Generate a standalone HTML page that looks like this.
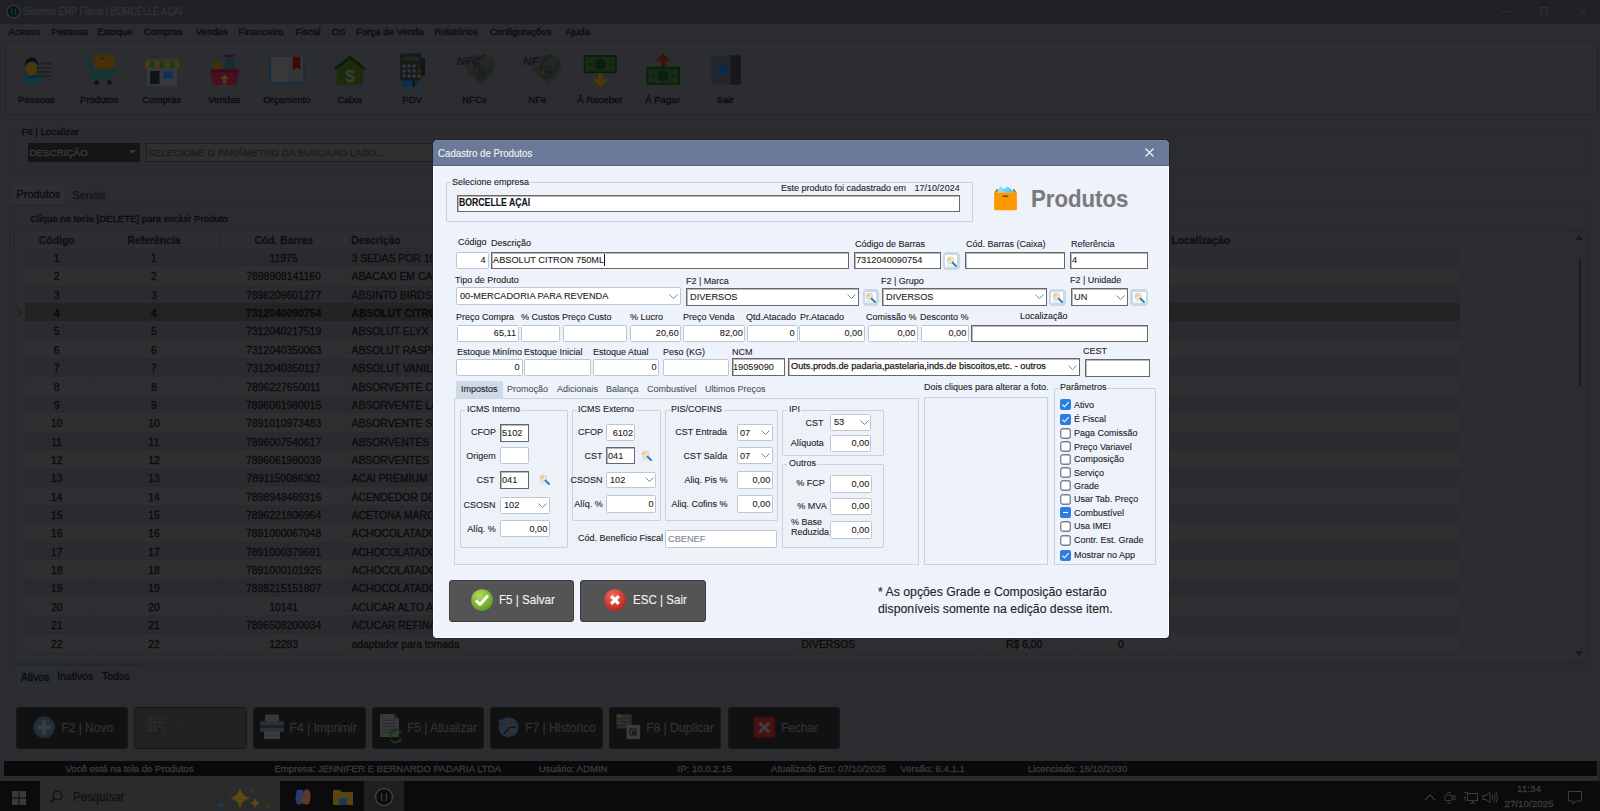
<!DOCTYPE html><html><head><meta charset="utf-8"><style>
html,body{margin:0;padding:0;width:1600px;height:811px;overflow:hidden;background:#2b2c2f;font-family:"Liberation Sans", sans-serif;}
.b{position:absolute;}
.t{position:absolute;white-space:nowrap;-webkit-text-stroke:0.25px currentColor;}
</style></head><body>
<div class="b" style="left:0.00px;top:0.00px;width:1600.00px;height:24.00px;background:#202125"></div>
<svg class="b" style="left:6px;top:4px" width="15" height="15" viewBox="0 0 15 15"><circle cx="7.5" cy="7.5" r="6.3" fill="#0c1518" stroke="#34363a" stroke-width="1.2"/><path d="M6 4.5 Q4.6 7.5 6 10.5 M9 4.5 Q10.4 7.5 9 10.5" stroke="#17464c" stroke-width="1.1" fill="none"/></svg>
<div class="t" style="left:22.90px;transform:scaleX(0.8696);transform-origin:0 0;top:4.58px;font-size:10.465px;line-height:13.08px;color:#333438;-webkit-text-stroke:0.3px currentColor;">Sistema ERP Fiscal | BORCELLE AÇAI</div>
<div class="b" style="left:1501.40px;top:10.80px;width:8.60px;height:1.00px;background:#2e2f33"></div>
<div class="b" style="left:1540.40px;top:7.00px;width:7.90px;height:7.80px;border:1px solid #2e2f33;box-sizing:border-box"></div>
<svg class="b" style="left:1578px;top:6.5px" width="9" height="9"><path d="M0.5 0.5L8.5 8.5M8.5 0.5L0.5 8.5" stroke="#2e2f33" stroke-width="1"/></svg>
<div class="b" style="left:0.00px;top:24.00px;width:1600.00px;height:17.00px;background:#2b2c2e"></div>
<div class="t" style="left:8.50px;top:26.27px;font-size:9.6px;line-height:12.0px;color:#0b0b0c;-webkit-text-stroke:0.3px currentColor;">Acesso</div>
<div class="t" style="left:51.25px;top:26.27px;font-size:9.6px;line-height:12.0px;color:#0b0b0c;-webkit-text-stroke:0.3px currentColor;">Pessoas</div>
<div class="t" style="left:97.25px;top:26.27px;font-size:9.6px;line-height:12.0px;color:#0b0b0c;-webkit-text-stroke:0.3px currentColor;">Estoque</div>
<div class="t" style="left:143.75px;top:26.27px;font-size:9.6px;line-height:12.0px;color:#0b0b0c;-webkit-text-stroke:0.3px currentColor;">Compras</div>
<div class="t" style="left:195.70px;top:26.27px;font-size:9.6px;line-height:12.0px;color:#0b0b0c;-webkit-text-stroke:0.3px currentColor;">Vendas</div>
<div class="t" style="left:238.30px;top:26.27px;font-size:9.6px;line-height:12.0px;color:#0b0b0c;-webkit-text-stroke:0.3px currentColor;">Financeiro</div>
<div class="t" style="left:295.50px;top:26.27px;font-size:9.6px;line-height:12.0px;color:#0b0b0c;-webkit-text-stroke:0.3px currentColor;">Fiscal</div>
<div class="t" style="left:331.70px;top:26.27px;font-size:9.6px;line-height:12.0px;color:#0b0b0c;-webkit-text-stroke:0.3px currentColor;">OS</div>
<div class="t" style="left:355.90px;top:26.27px;font-size:9.6px;line-height:12.0px;color:#0b0b0c;-webkit-text-stroke:0.3px currentColor;">Força de Venda</div>
<div class="t" style="left:434.60px;top:26.27px;font-size:9.6px;line-height:12.0px;color:#0b0b0c;-webkit-text-stroke:0.3px currentColor;">Relatórios</div>
<div class="t" style="left:489.70px;top:26.27px;font-size:9.6px;line-height:12.0px;color:#0b0b0c;-webkit-text-stroke:0.3px currentColor;">Configurações</div>
<div class="t" style="left:565.30px;top:26.27px;font-size:9.6px;line-height:12.0px;color:#0b0b0c;-webkit-text-stroke:0.3px currentColor;">Ajuda</div>
<div class="b" style="left:4.50px;top:41.00px;width:1593.50px;height:73.50px;border:1px solid #242528;box-sizing:border-box;background:#2c2d30"></div>
<div class="t" style="left:36.50px;transform:translateX(-50%) ;transform-origin:0 0;top:94.27px;font-size:9.6px;line-height:12.0px;color:#0b0b0c;-webkit-text-stroke:0.3px currentColor;">Pessoas</div>
<div class="t" style="left:99.10px;transform:translateX(-50%) ;transform-origin:0 0;top:94.27px;font-size:9.6px;line-height:12.0px;color:#0b0b0c;-webkit-text-stroke:0.3px currentColor;">Produtos</div>
<div class="t" style="left:161.70px;transform:translateX(-50%) ;transform-origin:0 0;top:94.27px;font-size:9.6px;line-height:12.0px;color:#0b0b0c;-webkit-text-stroke:0.3px currentColor;">Compras</div>
<div class="t" style="left:224.30px;transform:translateX(-50%) ;transform-origin:0 0;top:94.27px;font-size:9.6px;line-height:12.0px;color:#0b0b0c;-webkit-text-stroke:0.3px currentColor;">Vendas</div>
<div class="t" style="left:286.90px;transform:translateX(-50%) ;transform-origin:0 0;top:94.27px;font-size:9.6px;line-height:12.0px;color:#0b0b0c;-webkit-text-stroke:0.3px currentColor;">Orçamento</div>
<div class="t" style="left:349.50px;transform:translateX(-50%) ;transform-origin:0 0;top:94.27px;font-size:9.6px;line-height:12.0px;color:#0b0b0c;-webkit-text-stroke:0.3px currentColor;">Caixa</div>
<div class="t" style="left:412.10px;transform:translateX(-50%) ;transform-origin:0 0;top:94.27px;font-size:9.6px;line-height:12.0px;color:#0b0b0c;-webkit-text-stroke:0.3px currentColor;">PDV</div>
<div class="t" style="left:474.70px;transform:translateX(-50%) ;transform-origin:0 0;top:94.27px;font-size:9.6px;line-height:12.0px;color:#0b0b0c;-webkit-text-stroke:0.3px currentColor;">NFCe</div>
<div class="t" style="left:537.30px;transform:translateX(-50%) ;transform-origin:0 0;top:94.27px;font-size:9.6px;line-height:12.0px;color:#0b0b0c;-webkit-text-stroke:0.3px currentColor;">NFe</div>
<div class="t" style="left:599.90px;transform:translateX(-50%) ;transform-origin:0 0;top:94.27px;font-size:9.6px;line-height:12.0px;color:#0b0b0c;-webkit-text-stroke:0.3px currentColor;">Á Receber</div>
<div class="t" style="left:662.50px;transform:translateX(-50%) ;transform-origin:0 0;top:94.27px;font-size:9.6px;line-height:12.0px;color:#0b0b0c;-webkit-text-stroke:0.3px currentColor;">Á Pagar</div>
<div class="t" style="left:725.10px;transform:translateX(-50%) ;transform-origin:0 0;top:94.27px;font-size:9.6px;line-height:12.0px;color:#0b0b0c;-webkit-text-stroke:0.3px currentColor;">Sair</div>
<svg class="b" style="left:0;top:0" width="800" height="120"><path d="M22 83 Q22 75 30 74.5 L34 74.5 Q42 75 42 83Z" fill="#0f3546"/><rect x="36.5" y="62.8" width="15.3" height="1.4" fill="#1b2124"/><rect x="36.5" y="67" width="15.3" height="1.4" fill="#1b2124"/><rect x="36.5" y="71.2" width="15.3" height="1.4" fill="#1b2124"/><rect x="36.5" y="75.3" width="15.3" height="1.4" fill="#1b2124"/><ellipse cx="31.6" cy="68.8" rx="5.4" ry="7" fill="#4a3a0a"/><path d="M25.4 67 Q24.6 57.6 31.6 57.6 Q38.6 57.6 37.8 67 Q37 62.5 34.5 62 Q31 61.5 28 62.5 Q26 63.5 25.4 67Z" fill="#0f0f10"/><path d="M28.5 75 Q31.6 77.5 34.7 75 L34.7 76.5 Q31.6 78.5 28.5 76.5Z" fill="#0a2030"/><rect x="94.4" y="55" width="19.6" height="15" rx="1.5" fill="#4a3008"/><rect x="100.5" y="58" width="4.5" height="1" fill="#2a1a04"/><path d="M84 57 Q86 56 88 57.5 L92.5 74.5 L113 74.5 L113 70 L94 70" stroke="#0a3a30" stroke-width="2.6" fill="none"/><path d="M92.5 74.5 L92.5 78.5 L111 78.5" stroke="#0a3a30" stroke-width="2.6" fill="none"/><circle cx="96.6" cy="82.6" r="2.3" fill="#0e0e0f" stroke="#1e1e1f" stroke-width="0.8"/><circle cx="109.5" cy="82.6" r="2.3" fill="#0e0e0f" stroke="#1e1e1f" stroke-width="0.8"/><rect x="147" y="54.7" width="30" height="31" fill="#38393b"/><rect x="147" y="54.7" width="30" height="5" fill="#2e2f31"/><circle cx="150" cy="57" r="0.8" fill="#1e1e1f"/><circle cx="153" cy="57" r="0.8" fill="#1e1e1f"/><circle cx="156" cy="57" r="0.8" fill="#1e1e1f"/><path d="M145.40 60.4 L148.47 60.4 L149.47 67 Q146.90 70 144.40 67Z" fill="#4a3a10"/><path d="M150.47 60.4 L153.54 60.4 L154.54 67 Q151.97 70 149.47 67Z" fill="#1e3a12"/><path d="M155.54 60.4 L158.61 60.4 L159.61 67 Q157.04 70 154.54 67Z" fill="#4a3a10"/><path d="M160.61 60.4 L163.68 60.4 L164.68 67 Q162.11 70 159.61 67Z" fill="#1e3a12"/><path d="M165.68 60.4 L168.75 60.4 L169.75 67 Q167.18 70 164.68 67Z" fill="#4a3a10"/><path d="M170.75 60.4 L173.82 60.4 L174.82 67 Q172.25 70 169.75 67Z" fill="#1e3a12"/><path d="M175.82 60.4 L178.89 60.4 L179.89 67 Q177.32 70 174.82 67Z" fill="#4a3a10"/><rect x="150" y="71" width="9.6" height="13.2" fill="#101618"/><rect x="163.5" y="71.6" width="9.5" height="7.4" fill="#0e3060"/><path d="M223.7 69 L225 60 L225 56 L234 56 L234 60 L235.5 69Z" fill="#1e2a34"/><rect x="224.5" y="54.7" width="10" height="2.4" rx="1" fill="#2a0e2a"/><circle cx="217.5" cy="65.5" r="4.2" fill="#4a2e08"/><path d="M211 58.5 Q215 58.5 217 62 Q213 62 211 58.5Z" fill="#1a3a10"/><rect x="210.2" y="69.4" width="28.7" height="3.3" rx="1" fill="#3a0a1c"/><path d="M211 72.7 L238 72.7 L236.5 85 L212.5 85Z" fill="#4a0e22"/><path d="M224.5 74.5 L229 79 L226.3 79 L226.3 83.5 L222.7 83.5 L222.7 79 L220 79Z" fill="#4a4010"/><rect x="270.5" y="57" width="33.5" height="26" fill="#38393b"/><rect x="287.5" y="57" width="16.5" height="26" fill="#343537"/><path d="M270.5 57 L270.5 83 L304 83 L304 57" stroke="#0e2e4a" stroke-width="1.5" fill="none"/><path d="M292.9 57 L300.2 57 L300.2 70 L296.5 67.5 L292.9 70Z" fill="#3a0808"/><path d="M336.5 68 L350 58 L363.2 68 L363.2 84.9 L336.5 84.9Z" fill="#1e2a0e"/><path d="M334.8 67.5 L350 55.3 L364.9 67.5 L364.9 70.5 L350 59.5 L334.8 70.5Z" fill="#0a1e0a"/><text x="350" y="81.5" font-family="Liberation Sans" font-weight="700" font-size="17" fill="#3a3c38" text-anchor="middle">$</text><rect x="421" y="58" width="4" height="18" rx="1" fill="#101418"/><rect x="402.4" y="79" width="15.8" height="7.8" rx="1" fill="#0e2e50"/><rect x="413" y="79" width="1.5" height="7.8" fill="#0a0a0a"/><rect x="400.2" y="53.6" width="21.4" height="27" rx="2.5" fill="#131a20"/><rect x="402.6" y="56.4" width="16.4" height="4.4" fill="#1e2a12"/><rect x="402.5" y="64.5" width="3" height="3" fill="#3a3a3b"/><rect x="407.5" y="64.5" width="3" height="3" fill="#3a3a3b"/><rect x="412.5" y="64.5" width="3" height="3" fill="#3a3a3b"/><rect x="417.5" y="64.5" width="3" height="3" fill="#4a1010"/><rect x="402.5" y="69.5" width="3" height="3" fill="#3a3a3b"/><rect x="407.5" y="69.5" width="3" height="3" fill="#3a3a3b"/><rect x="412.5" y="69.5" width="3" height="3" fill="#3a3a3b"/><rect x="417.5" y="69.5" width="3" height="3" fill="#1a3a14"/><rect x="402.5" y="74.5" width="3" height="3" fill="#3a3a3b"/><rect x="407.5" y="74.5" width="3" height="3" fill="#3a3a3b"/><rect x="412.5" y="74.5" width="3" height="3" fill="#3a3a3b"/><rect x="417.5" y="74.5" width="3" height="3" fill="#4a3a08"/><g transform="translate(0.0 0)"><path d="M466 60 Q472 54 480 55 Q490 54 494 60 Q497 66 493 72 Q490 80 484 81 L482 86 Q479 82 474 78 Q468 74 466 68 Q463 64 466 60Z" fill="#252629"/><ellipse cx="482.6" cy="66.7" rx="7.5" ry="13" transform="rotate(30 482.6 66.7)" fill="none" stroke="#0e2a0e" stroke-width="1.3"/><path d="M486 54.5 Q492 56 491 62" stroke="#3a2e08" stroke-width="1.3" fill="none"/><path d="M474 70 Q472 77 477 79" stroke="#3a2e08" stroke-width="1.3" fill="none"/><text x="474" y="77" font-family="Liberation Sans" font-style="italic" font-weight="700" font-size="21" fill="#2e2f32" stroke="#161618" stroke-width="1">e</text><text x="456.7" y="64.5" font-family="Liberation Sans" font-style="italic" font-weight="700" font-size="11.5" fill="#161618">NFC</text></g><g transform="translate(66.4 0)"><path d="M466 60 Q472 54 480 55 Q490 54 494 60 Q497 66 493 72 Q490 80 484 81 L482 86 Q479 82 474 78 Q468 74 466 68 Q463 64 466 60Z" fill="#252629"/><ellipse cx="482.6" cy="66.7" rx="7.5" ry="13" transform="rotate(30 482.6 66.7)" fill="none" stroke="#0e2a0e" stroke-width="1.3"/><path d="M486 54.5 Q492 56 491 62" stroke="#3a2e08" stroke-width="1.3" fill="none"/><path d="M474 70 Q472 77 477 79" stroke="#3a2e08" stroke-width="1.3" fill="none"/><text x="474" y="77" font-family="Liberation Sans" font-style="italic" font-weight="700" font-size="21" fill="#2e2f32" stroke="#161618" stroke-width="1">e</text><text x="456.7" y="64.5" font-family="Liberation Sans" font-style="italic" font-weight="700" font-size="11.5" fill="#161618">NF</text></g><rect x="583.7" y="55" width="33.3" height="18.3" fill="#082208"/><rect x="585.7" y="57" width="29.3" height="14.3" fill="#172a17"/><circle cx="600.4" cy="64.2" r="5.5" fill="#0a200a"/><circle cx="590.5" cy="64.2" r="1.2" fill="#0a200a"/><circle cx="610.3" cy="64.2" r="1.2" fill="#0a200a"/><rect x="598" y="73.3" width="5" height="6" fill="#4a3a08"/><path d="M593 79 L608 79 L600.5 87.4Z" fill="#4a3a08"/><path d="M656 61 L663 52.7 L670 61Z" fill="#3a1208"/><rect x="661" y="61" width="4.5" height="6" fill="#3a1208"/><rect x="646.3" y="66.9" width="33.7" height="18" fill="#082208"/><rect x="648.3" y="68.9" width="29.7" height="14" fill="#172a17"/><circle cx="663" cy="75.9" r="5.5" fill="#0a200a"/><circle cx="653" cy="75.9" r="1.2" fill="#0a200a"/><circle cx="673" cy="75.9" r="1.2" fill="#0a200a"/><rect x="711.2" y="55.3" width="19.1" height="29.3" fill="#23272d"/><rect x="730.3" y="55.3" width="10.5" height="29.3" fill="#15171a"/><rect x="713" y="68.7" width="8" height="2.8" fill="#0a2a4a"/><path d="M720 64 L728 70.1 L720 76.2Z" fill="#0a2a4a"/></svg>
<div class="b" style="left:14.30px;top:131.50px;width:1572.90px;height:40.70px;border:1px solid #262729;box-sizing:border-box"></div>
<div class="b" style="left:19.00px;top:126.00px;width:61.00px;height:12.00px;background:#2b2c2f"></div>
<div class="t" style="left:21.50px;top:126.27px;font-size:9.6px;line-height:12.0px;color:#0b0b0c;-webkit-text-stroke:0.3px currentColor;">F6 | Localizar</div>
<div class="b" style="left:27.50px;top:143.00px;width:112.80px;height:18.75px;background:#151516"></div>
<div class="t" style="left:29.50px;top:146.78px;font-size:9.8px;line-height:12.25px;color:#3d3d3f;-webkit-text-stroke:0.3px currentColor;">DESCRIÇÃO</div>
<svg class="b" style="left:129px;top:150px" width="7" height="4"><path d="M0 0L7 0L3.5 4Z" fill="#3a3a3c"/></svg>
<div class="b" style="left:146.30px;top:143.00px;width:1003.70px;height:19.00px;border:1px solid #1d1d1f;box-sizing:border-box;background:#2e2f31"></div>
<div class="t" style="left:148.50px;top:146.78px;font-size:9.8px;line-height:12.25px;color:#1c1c1e;-webkit-text-stroke:0.3px currentColor;">SELECIONE O PARÂMETRO DA BUSCA AO LADO...</div>
<div class="b" style="left:13.20px;top:185.10px;width:51.80px;height:18.90px;background:#2f3033;border-radius:2px 2px 0 0"></div>
<div class="t" style="left:16.60px;top:188.21px;font-size:10.9px;line-height:13.62px;color:#0b0b0c;-webkit-text-stroke:0.3px currentColor;">Produtos</div>
<div class="t" style="left:72.50px;top:188.71px;font-size:10.9px;line-height:13.62px;color:#161618;-webkit-text-stroke:0.3px currentColor;">Seriais</div>
<div class="b" style="left:10.30px;top:204.50px;width:1580.90px;height:460.50px;border:1px solid #262729;box-sizing:border-box"></div>
<div class="t" style="left:30.40px;top:213.17px;font-size:9.6px;line-height:12.0px;color:#0b0b0c;-webkit-text-stroke:0.3px currentColor;">Clique na tecla [DELETE] para excluir Produto</div>
<div class="b" style="left:13.50px;top:229.80px;width:1574.00px;height:433.00px;border:1px solid #242527;box-sizing:border-box;background:#2c2d30"></div>
<div class="b" style="left:14.50px;top:230.80px;width:1445.50px;height:17.20px;background:#2d2e31"></div>
<div class="b" style="left:24.50px;top:230.80px;width:1.00px;height:17.20px;background:#28292b"></div>
<div class="b" style="left:89.00px;top:230.80px;width:1.00px;height:17.20px;background:#28292b"></div>
<div class="b" style="left:219.20px;top:230.80px;width:1.00px;height:17.20px;background:#28292b"></div>
<div class="b" style="left:348.10px;top:230.80px;width:1.00px;height:17.20px;background:#28292b"></div>
<div class="b" style="left:797.00px;top:230.80px;width:1.00px;height:17.20px;background:#28292b"></div>
<div class="b" style="left:976.60px;top:230.80px;width:1.00px;height:17.20px;background:#28292b"></div>
<div class="b" style="left:1072.00px;top:230.80px;width:1.00px;height:17.20px;background:#28292b"></div>
<div class="b" style="left:1168.75px;top:230.80px;width:1.00px;height:17.20px;background:#28292b"></div>
<div class="b" style="left:1460.00px;top:230.80px;width:1.00px;height:17.20px;background:#28292b"></div>
<div class="t" style="left:56.75px;transform:translateX(-50%) ;transform-origin:0 0;top:233.65px;font-size:10.4px;line-height:13.0px;color:#111113;font-weight:700;-webkit-text-stroke:0.3px currentColor;">Código</div>
<div class="t" style="left:154.00px;transform:translateX(-50%) ;transform-origin:0 0;top:233.65px;font-size:10.4px;line-height:13.0px;color:#111113;font-weight:700;-webkit-text-stroke:0.3px currentColor;">Referência</div>
<div class="t" style="left:283.60px;transform:translateX(-50%) ;transform-origin:0 0;top:233.65px;font-size:10.4px;line-height:13.0px;color:#111113;font-weight:700;-webkit-text-stroke:0.3px currentColor;">Cód. Barras</div>
<div class="t" style="left:351.00px;top:233.65px;font-size:10.4px;line-height:13.0px;color:#111113;font-weight:700;-webkit-text-stroke:0.3px currentColor;">Descrição</div>
<div class="t" style="left:1171.30px;top:233.65px;font-size:10.4px;line-height:13.0px;color:#111113;font-weight:700;-webkit-text-stroke:0.3px currentColor;">Localização</div>
<div class="b" style="left:24.50px;top:248.00px;width:1435.50px;height:18.36px;background:#2a2b2e"></div>
<div class="t" style="left:56.75px;transform:translateX(-50%) ;transform-origin:0 0;top:252.00px;font-size:10.4px;line-height:13.0px;color:#0b0b0c;-webkit-text-stroke:0.3px currentColor;">1</div>
<div class="t" style="left:154.00px;transform:translateX(-50%) ;transform-origin:0 0;top:252.00px;font-size:10.4px;line-height:13.0px;color:#0b0b0c;-webkit-text-stroke:0.3px currentColor;">1</div>
<div class="t" style="left:283.60px;transform:translateX(-50%) ;transform-origin:0 0;top:252.00px;font-size:10.4px;line-height:13.0px;color:#0b0b0c;-webkit-text-stroke:0.3px currentColor;">11975</div>
<div class="t" style="left:351.50px;top:252.00px;font-size:10.4px;line-height:13.0px;color:#0b0b0c;-webkit-text-stroke:0.3px currentColor;">3 SEDAS POR 10 UNIDADES</div>
<div class="b" style="left:24.50px;top:248.00px;width:1.00px;height:18.36px;background:rgba(0,0,0,0.06)"></div>
<div class="b" style="left:89.00px;top:248.00px;width:1.00px;height:18.36px;background:rgba(0,0,0,0.06)"></div>
<div class="b" style="left:219.20px;top:248.00px;width:1.00px;height:18.36px;background:rgba(0,0,0,0.06)"></div>
<div class="b" style="left:348.10px;top:248.00px;width:1.00px;height:18.36px;background:rgba(0,0,0,0.06)"></div>
<div class="b" style="left:797.00px;top:248.00px;width:1.00px;height:18.36px;background:rgba(0,0,0,0.06)"></div>
<div class="b" style="left:976.60px;top:248.00px;width:1.00px;height:18.36px;background:rgba(0,0,0,0.06)"></div>
<div class="b" style="left:1072.00px;top:248.00px;width:1.00px;height:18.36px;background:rgba(0,0,0,0.06)"></div>
<div class="b" style="left:1168.75px;top:248.00px;width:1.00px;height:18.36px;background:rgba(0,0,0,0.06)"></div>
<div class="b" style="left:24.50px;top:266.36px;width:1435.50px;height:18.36px;background:#2e2f31"></div>
<div class="t" style="left:56.75px;transform:translateX(-50%) ;transform-origin:0 0;top:270.36px;font-size:10.4px;line-height:13.0px;color:#0b0b0c;-webkit-text-stroke:0.3px currentColor;">2</div>
<div class="t" style="left:154.00px;transform:translateX(-50%) ;transform-origin:0 0;top:270.36px;font-size:10.4px;line-height:13.0px;color:#0b0b0c;-webkit-text-stroke:0.3px currentColor;">2</div>
<div class="t" style="left:283.60px;transform:translateX(-50%) ;transform-origin:0 0;top:270.36px;font-size:10.4px;line-height:13.0px;color:#0b0b0c;-webkit-text-stroke:0.3px currentColor;">7898908141160</div>
<div class="t" style="left:351.50px;top:270.36px;font-size:10.4px;line-height:13.0px;color:#0b0b0c;-webkit-text-stroke:0.3px currentColor;">ABACAXI EM CALDA</div>
<div class="b" style="left:24.50px;top:266.36px;width:1.00px;height:18.36px;background:rgba(0,0,0,0.06)"></div>
<div class="b" style="left:89.00px;top:266.36px;width:1.00px;height:18.36px;background:rgba(0,0,0,0.06)"></div>
<div class="b" style="left:219.20px;top:266.36px;width:1.00px;height:18.36px;background:rgba(0,0,0,0.06)"></div>
<div class="b" style="left:348.10px;top:266.36px;width:1.00px;height:18.36px;background:rgba(0,0,0,0.06)"></div>
<div class="b" style="left:797.00px;top:266.36px;width:1.00px;height:18.36px;background:rgba(0,0,0,0.06)"></div>
<div class="b" style="left:976.60px;top:266.36px;width:1.00px;height:18.36px;background:rgba(0,0,0,0.06)"></div>
<div class="b" style="left:1072.00px;top:266.36px;width:1.00px;height:18.36px;background:rgba(0,0,0,0.06)"></div>
<div class="b" style="left:1168.75px;top:266.36px;width:1.00px;height:18.36px;background:rgba(0,0,0,0.06)"></div>
<div class="b" style="left:24.50px;top:284.72px;width:1435.50px;height:18.36px;background:#2a2b2e"></div>
<div class="t" style="left:56.75px;transform:translateX(-50%) ;transform-origin:0 0;top:288.72px;font-size:10.4px;line-height:13.0px;color:#0b0b0c;-webkit-text-stroke:0.3px currentColor;">3</div>
<div class="t" style="left:154.00px;transform:translateX(-50%) ;transform-origin:0 0;top:288.72px;font-size:10.4px;line-height:13.0px;color:#0b0b0c;-webkit-text-stroke:0.3px currentColor;">3</div>
<div class="t" style="left:283.60px;transform:translateX(-50%) ;transform-origin:0 0;top:288.72px;font-size:10.4px;line-height:13.0px;color:#0b0b0c;-webkit-text-stroke:0.3px currentColor;">7896209601277</div>
<div class="t" style="left:351.50px;top:288.72px;font-size:10.4px;line-height:13.0px;color:#0b0b0c;-webkit-text-stroke:0.3px currentColor;">ABSINTO BIRDS 750ML</div>
<div class="b" style="left:24.50px;top:284.72px;width:1.00px;height:18.36px;background:rgba(0,0,0,0.06)"></div>
<div class="b" style="left:89.00px;top:284.72px;width:1.00px;height:18.36px;background:rgba(0,0,0,0.06)"></div>
<div class="b" style="left:219.20px;top:284.72px;width:1.00px;height:18.36px;background:rgba(0,0,0,0.06)"></div>
<div class="b" style="left:348.10px;top:284.72px;width:1.00px;height:18.36px;background:rgba(0,0,0,0.06)"></div>
<div class="b" style="left:797.00px;top:284.72px;width:1.00px;height:18.36px;background:rgba(0,0,0,0.06)"></div>
<div class="b" style="left:976.60px;top:284.72px;width:1.00px;height:18.36px;background:rgba(0,0,0,0.06)"></div>
<div class="b" style="left:1072.00px;top:284.72px;width:1.00px;height:18.36px;background:rgba(0,0,0,0.06)"></div>
<div class="b" style="left:1168.75px;top:284.72px;width:1.00px;height:18.36px;background:rgba(0,0,0,0.06)"></div>
<div class="b" style="left:24.50px;top:303.08px;width:1435.50px;height:18.36px;background:#232324"></div>
<svg class="b" style="left:16px;top:308.08px" width="6" height="9"><path d="M1 0.5L5 4.5L1 8.5" stroke="#161617" stroke-width="1" fill="none"/></svg>
<div class="t" style="left:56.75px;transform:translateX(-50%) ;transform-origin:0 0;top:307.08px;font-size:10.4px;line-height:13.0px;color:#0b0b0c;font-weight:700;-webkit-text-stroke:0.3px currentColor;">4</div>
<div class="t" style="left:154.00px;transform:translateX(-50%) ;transform-origin:0 0;top:307.08px;font-size:10.4px;line-height:13.0px;color:#0b0b0c;font-weight:700;-webkit-text-stroke:0.3px currentColor;">4</div>
<div class="t" style="left:283.60px;transform:translateX(-50%) ;transform-origin:0 0;top:307.08px;font-size:10.4px;line-height:13.0px;color:#0b0b0c;font-weight:700;-webkit-text-stroke:0.3px currentColor;">7312040090754</div>
<div class="t" style="left:351.50px;top:307.08px;font-size:10.4px;line-height:13.0px;color:#0b0b0c;font-weight:700;-webkit-text-stroke:0.3px currentColor;">ABSOLUT CITRON 750ML</div>
<div class="b" style="left:24.50px;top:303.08px;width:1.00px;height:18.36px;background:rgba(0,0,0,0.06)"></div>
<div class="b" style="left:89.00px;top:303.08px;width:1.00px;height:18.36px;background:rgba(0,0,0,0.06)"></div>
<div class="b" style="left:219.20px;top:303.08px;width:1.00px;height:18.36px;background:rgba(0,0,0,0.06)"></div>
<div class="b" style="left:348.10px;top:303.08px;width:1.00px;height:18.36px;background:rgba(0,0,0,0.06)"></div>
<div class="b" style="left:797.00px;top:303.08px;width:1.00px;height:18.36px;background:rgba(0,0,0,0.06)"></div>
<div class="b" style="left:976.60px;top:303.08px;width:1.00px;height:18.36px;background:rgba(0,0,0,0.06)"></div>
<div class="b" style="left:1072.00px;top:303.08px;width:1.00px;height:18.36px;background:rgba(0,0,0,0.06)"></div>
<div class="b" style="left:1168.75px;top:303.08px;width:1.00px;height:18.36px;background:rgba(0,0,0,0.06)"></div>
<div class="b" style="left:24.50px;top:321.44px;width:1435.50px;height:18.36px;background:#2a2b2e"></div>
<div class="t" style="left:56.75px;transform:translateX(-50%) ;transform-origin:0 0;top:325.44px;font-size:10.4px;line-height:13.0px;color:#0b0b0c;-webkit-text-stroke:0.3px currentColor;">5</div>
<div class="t" style="left:154.00px;transform:translateX(-50%) ;transform-origin:0 0;top:325.44px;font-size:10.4px;line-height:13.0px;color:#0b0b0c;-webkit-text-stroke:0.3px currentColor;">5</div>
<div class="t" style="left:283.60px;transform:translateX(-50%) ;transform-origin:0 0;top:325.44px;font-size:10.4px;line-height:13.0px;color:#0b0b0c;-webkit-text-stroke:0.3px currentColor;">7312040217519</div>
<div class="t" style="left:351.50px;top:325.44px;font-size:10.4px;line-height:13.0px;color:#0b0b0c;-webkit-text-stroke:0.3px currentColor;">ABSOLUT ELYX 750ML</div>
<div class="b" style="left:24.50px;top:321.44px;width:1.00px;height:18.36px;background:rgba(0,0,0,0.06)"></div>
<div class="b" style="left:89.00px;top:321.44px;width:1.00px;height:18.36px;background:rgba(0,0,0,0.06)"></div>
<div class="b" style="left:219.20px;top:321.44px;width:1.00px;height:18.36px;background:rgba(0,0,0,0.06)"></div>
<div class="b" style="left:348.10px;top:321.44px;width:1.00px;height:18.36px;background:rgba(0,0,0,0.06)"></div>
<div class="b" style="left:797.00px;top:321.44px;width:1.00px;height:18.36px;background:rgba(0,0,0,0.06)"></div>
<div class="b" style="left:976.60px;top:321.44px;width:1.00px;height:18.36px;background:rgba(0,0,0,0.06)"></div>
<div class="b" style="left:1072.00px;top:321.44px;width:1.00px;height:18.36px;background:rgba(0,0,0,0.06)"></div>
<div class="b" style="left:1168.75px;top:321.44px;width:1.00px;height:18.36px;background:rgba(0,0,0,0.06)"></div>
<div class="b" style="left:24.50px;top:339.80px;width:1435.50px;height:18.36px;background:#2e2f31"></div>
<div class="t" style="left:56.75px;transform:translateX(-50%) ;transform-origin:0 0;top:343.80px;font-size:10.4px;line-height:13.0px;color:#0b0b0c;-webkit-text-stroke:0.3px currentColor;">6</div>
<div class="t" style="left:154.00px;transform:translateX(-50%) ;transform-origin:0 0;top:343.80px;font-size:10.4px;line-height:13.0px;color:#0b0b0c;-webkit-text-stroke:0.3px currentColor;">6</div>
<div class="t" style="left:283.60px;transform:translateX(-50%) ;transform-origin:0 0;top:343.80px;font-size:10.4px;line-height:13.0px;color:#0b0b0c;-webkit-text-stroke:0.3px currentColor;">7312040350063</div>
<div class="t" style="left:351.50px;top:343.80px;font-size:10.4px;line-height:13.0px;color:#0b0b0c;-webkit-text-stroke:0.3px currentColor;">ABSOLUT RASPBERRI</div>
<div class="b" style="left:24.50px;top:339.80px;width:1.00px;height:18.36px;background:rgba(0,0,0,0.06)"></div>
<div class="b" style="left:89.00px;top:339.80px;width:1.00px;height:18.36px;background:rgba(0,0,0,0.06)"></div>
<div class="b" style="left:219.20px;top:339.80px;width:1.00px;height:18.36px;background:rgba(0,0,0,0.06)"></div>
<div class="b" style="left:348.10px;top:339.80px;width:1.00px;height:18.36px;background:rgba(0,0,0,0.06)"></div>
<div class="b" style="left:797.00px;top:339.80px;width:1.00px;height:18.36px;background:rgba(0,0,0,0.06)"></div>
<div class="b" style="left:976.60px;top:339.80px;width:1.00px;height:18.36px;background:rgba(0,0,0,0.06)"></div>
<div class="b" style="left:1072.00px;top:339.80px;width:1.00px;height:18.36px;background:rgba(0,0,0,0.06)"></div>
<div class="b" style="left:1168.75px;top:339.80px;width:1.00px;height:18.36px;background:rgba(0,0,0,0.06)"></div>
<div class="b" style="left:24.50px;top:358.16px;width:1435.50px;height:18.36px;background:#2a2b2e"></div>
<div class="t" style="left:56.75px;transform:translateX(-50%) ;transform-origin:0 0;top:362.16px;font-size:10.4px;line-height:13.0px;color:#0b0b0c;-webkit-text-stroke:0.3px currentColor;">7</div>
<div class="t" style="left:154.00px;transform:translateX(-50%) ;transform-origin:0 0;top:362.16px;font-size:10.4px;line-height:13.0px;color:#0b0b0c;-webkit-text-stroke:0.3px currentColor;">7</div>
<div class="t" style="left:283.60px;transform:translateX(-50%) ;transform-origin:0 0;top:362.16px;font-size:10.4px;line-height:13.0px;color:#0b0b0c;-webkit-text-stroke:0.3px currentColor;">7312040350117</div>
<div class="t" style="left:351.50px;top:362.16px;font-size:10.4px;line-height:13.0px;color:#0b0b0c;-webkit-text-stroke:0.3px currentColor;">ABSOLUT VANILIA</div>
<div class="b" style="left:24.50px;top:358.16px;width:1.00px;height:18.36px;background:rgba(0,0,0,0.06)"></div>
<div class="b" style="left:89.00px;top:358.16px;width:1.00px;height:18.36px;background:rgba(0,0,0,0.06)"></div>
<div class="b" style="left:219.20px;top:358.16px;width:1.00px;height:18.36px;background:rgba(0,0,0,0.06)"></div>
<div class="b" style="left:348.10px;top:358.16px;width:1.00px;height:18.36px;background:rgba(0,0,0,0.06)"></div>
<div class="b" style="left:797.00px;top:358.16px;width:1.00px;height:18.36px;background:rgba(0,0,0,0.06)"></div>
<div class="b" style="left:976.60px;top:358.16px;width:1.00px;height:18.36px;background:rgba(0,0,0,0.06)"></div>
<div class="b" style="left:1072.00px;top:358.16px;width:1.00px;height:18.36px;background:rgba(0,0,0,0.06)"></div>
<div class="b" style="left:1168.75px;top:358.16px;width:1.00px;height:18.36px;background:rgba(0,0,0,0.06)"></div>
<div class="b" style="left:24.50px;top:376.52px;width:1435.50px;height:18.36px;background:#2e2f31"></div>
<div class="t" style="left:56.75px;transform:translateX(-50%) ;transform-origin:0 0;top:380.52px;font-size:10.4px;line-height:13.0px;color:#0b0b0c;-webkit-text-stroke:0.3px currentColor;">8</div>
<div class="t" style="left:154.00px;transform:translateX(-50%) ;transform-origin:0 0;top:380.52px;font-size:10.4px;line-height:13.0px;color:#0b0b0c;-webkit-text-stroke:0.3px currentColor;">8</div>
<div class="t" style="left:283.60px;transform:translateX(-50%) ;transform-origin:0 0;top:380.52px;font-size:10.4px;line-height:13.0px;color:#0b0b0c;-webkit-text-stroke:0.3px currentColor;">7896227650011</div>
<div class="t" style="left:351.50px;top:380.52px;font-size:10.4px;line-height:13.0px;color:#0b0b0c;-webkit-text-stroke:0.3px currentColor;">ABSORVENTE COM ABAS</div>
<div class="b" style="left:24.50px;top:376.52px;width:1.00px;height:18.36px;background:rgba(0,0,0,0.06)"></div>
<div class="b" style="left:89.00px;top:376.52px;width:1.00px;height:18.36px;background:rgba(0,0,0,0.06)"></div>
<div class="b" style="left:219.20px;top:376.52px;width:1.00px;height:18.36px;background:rgba(0,0,0,0.06)"></div>
<div class="b" style="left:348.10px;top:376.52px;width:1.00px;height:18.36px;background:rgba(0,0,0,0.06)"></div>
<div class="b" style="left:797.00px;top:376.52px;width:1.00px;height:18.36px;background:rgba(0,0,0,0.06)"></div>
<div class="b" style="left:976.60px;top:376.52px;width:1.00px;height:18.36px;background:rgba(0,0,0,0.06)"></div>
<div class="b" style="left:1072.00px;top:376.52px;width:1.00px;height:18.36px;background:rgba(0,0,0,0.06)"></div>
<div class="b" style="left:1168.75px;top:376.52px;width:1.00px;height:18.36px;background:rgba(0,0,0,0.06)"></div>
<div class="b" style="left:24.50px;top:394.88px;width:1435.50px;height:18.36px;background:#2a2b2e"></div>
<div class="t" style="left:56.75px;transform:translateX(-50%) ;transform-origin:0 0;top:398.88px;font-size:10.4px;line-height:13.0px;color:#0b0b0c;-webkit-text-stroke:0.3px currentColor;">9</div>
<div class="t" style="left:154.00px;transform:translateX(-50%) ;transform-origin:0 0;top:398.88px;font-size:10.4px;line-height:13.0px;color:#0b0b0c;-webkit-text-stroke:0.3px currentColor;">9</div>
<div class="t" style="left:283.60px;transform:translateX(-50%) ;transform-origin:0 0;top:398.88px;font-size:10.4px;line-height:13.0px;color:#0b0b0c;-webkit-text-stroke:0.3px currentColor;">7896061980015</div>
<div class="t" style="left:351.50px;top:398.88px;font-size:10.4px;line-height:13.0px;color:#0b0b0c;-webkit-text-stroke:0.3px currentColor;">ABSORVENTE LARGO</div>
<div class="b" style="left:24.50px;top:394.88px;width:1.00px;height:18.36px;background:rgba(0,0,0,0.06)"></div>
<div class="b" style="left:89.00px;top:394.88px;width:1.00px;height:18.36px;background:rgba(0,0,0,0.06)"></div>
<div class="b" style="left:219.20px;top:394.88px;width:1.00px;height:18.36px;background:rgba(0,0,0,0.06)"></div>
<div class="b" style="left:348.10px;top:394.88px;width:1.00px;height:18.36px;background:rgba(0,0,0,0.06)"></div>
<div class="b" style="left:797.00px;top:394.88px;width:1.00px;height:18.36px;background:rgba(0,0,0,0.06)"></div>
<div class="b" style="left:976.60px;top:394.88px;width:1.00px;height:18.36px;background:rgba(0,0,0,0.06)"></div>
<div class="b" style="left:1072.00px;top:394.88px;width:1.00px;height:18.36px;background:rgba(0,0,0,0.06)"></div>
<div class="b" style="left:1168.75px;top:394.88px;width:1.00px;height:18.36px;background:rgba(0,0,0,0.06)"></div>
<div class="b" style="left:24.50px;top:413.24px;width:1435.50px;height:18.36px;background:#2e2f31"></div>
<div class="t" style="left:56.75px;transform:translateX(-50%) ;transform-origin:0 0;top:417.24px;font-size:10.4px;line-height:13.0px;color:#0b0b0c;-webkit-text-stroke:0.3px currentColor;">10</div>
<div class="t" style="left:154.00px;transform:translateX(-50%) ;transform-origin:0 0;top:417.24px;font-size:10.4px;line-height:13.0px;color:#0b0b0c;-webkit-text-stroke:0.3px currentColor;">10</div>
<div class="t" style="left:283.60px;transform:translateX(-50%) ;transform-origin:0 0;top:417.24px;font-size:10.4px;line-height:13.0px;color:#0b0b0c;-webkit-text-stroke:0.3px currentColor;">7891010973483</div>
<div class="t" style="left:351.50px;top:417.24px;font-size:10.4px;line-height:13.0px;color:#0b0b0c;-webkit-text-stroke:0.3px currentColor;">ABSORVENTE SEMPRE</div>
<div class="b" style="left:24.50px;top:413.24px;width:1.00px;height:18.36px;background:rgba(0,0,0,0.06)"></div>
<div class="b" style="left:89.00px;top:413.24px;width:1.00px;height:18.36px;background:rgba(0,0,0,0.06)"></div>
<div class="b" style="left:219.20px;top:413.24px;width:1.00px;height:18.36px;background:rgba(0,0,0,0.06)"></div>
<div class="b" style="left:348.10px;top:413.24px;width:1.00px;height:18.36px;background:rgba(0,0,0,0.06)"></div>
<div class="b" style="left:797.00px;top:413.24px;width:1.00px;height:18.36px;background:rgba(0,0,0,0.06)"></div>
<div class="b" style="left:976.60px;top:413.24px;width:1.00px;height:18.36px;background:rgba(0,0,0,0.06)"></div>
<div class="b" style="left:1072.00px;top:413.24px;width:1.00px;height:18.36px;background:rgba(0,0,0,0.06)"></div>
<div class="b" style="left:1168.75px;top:413.24px;width:1.00px;height:18.36px;background:rgba(0,0,0,0.06)"></div>
<div class="b" style="left:24.50px;top:431.60px;width:1435.50px;height:18.36px;background:#2a2b2e"></div>
<div class="t" style="left:56.75px;transform:translateX(-50%) ;transform-origin:0 0;top:435.60px;font-size:10.4px;line-height:13.0px;color:#0b0b0c;-webkit-text-stroke:0.3px currentColor;">11</div>
<div class="t" style="left:154.00px;transform:translateX(-50%) ;transform-origin:0 0;top:435.60px;font-size:10.4px;line-height:13.0px;color:#0b0b0c;-webkit-text-stroke:0.3px currentColor;">11</div>
<div class="t" style="left:283.60px;transform:translateX(-50%) ;transform-origin:0 0;top:435.60px;font-size:10.4px;line-height:13.0px;color:#0b0b0c;-webkit-text-stroke:0.3px currentColor;">7896007540617</div>
<div class="t" style="left:351.50px;top:435.60px;font-size:10.4px;line-height:13.0px;color:#0b0b0c;-webkit-text-stroke:0.3px currentColor;">ABSORVENTES INTIMUS</div>
<div class="b" style="left:24.50px;top:431.60px;width:1.00px;height:18.36px;background:rgba(0,0,0,0.06)"></div>
<div class="b" style="left:89.00px;top:431.60px;width:1.00px;height:18.36px;background:rgba(0,0,0,0.06)"></div>
<div class="b" style="left:219.20px;top:431.60px;width:1.00px;height:18.36px;background:rgba(0,0,0,0.06)"></div>
<div class="b" style="left:348.10px;top:431.60px;width:1.00px;height:18.36px;background:rgba(0,0,0,0.06)"></div>
<div class="b" style="left:797.00px;top:431.60px;width:1.00px;height:18.36px;background:rgba(0,0,0,0.06)"></div>
<div class="b" style="left:976.60px;top:431.60px;width:1.00px;height:18.36px;background:rgba(0,0,0,0.06)"></div>
<div class="b" style="left:1072.00px;top:431.60px;width:1.00px;height:18.36px;background:rgba(0,0,0,0.06)"></div>
<div class="b" style="left:1168.75px;top:431.60px;width:1.00px;height:18.36px;background:rgba(0,0,0,0.06)"></div>
<div class="b" style="left:24.50px;top:449.96px;width:1435.50px;height:18.36px;background:#2e2f31"></div>
<div class="t" style="left:56.75px;transform:translateX(-50%) ;transform-origin:0 0;top:453.96px;font-size:10.4px;line-height:13.0px;color:#0b0b0c;-webkit-text-stroke:0.3px currentColor;">12</div>
<div class="t" style="left:154.00px;transform:translateX(-50%) ;transform-origin:0 0;top:453.96px;font-size:10.4px;line-height:13.0px;color:#0b0b0c;-webkit-text-stroke:0.3px currentColor;">12</div>
<div class="t" style="left:283.60px;transform:translateX(-50%) ;transform-origin:0 0;top:453.96px;font-size:10.4px;line-height:13.0px;color:#0b0b0c;-webkit-text-stroke:0.3px currentColor;">7896061980039</div>
<div class="t" style="left:351.50px;top:453.96px;font-size:10.4px;line-height:13.0px;color:#0b0b0c;-webkit-text-stroke:0.3px currentColor;">ABSORVENTES LARGO</div>
<div class="b" style="left:24.50px;top:449.96px;width:1.00px;height:18.36px;background:rgba(0,0,0,0.06)"></div>
<div class="b" style="left:89.00px;top:449.96px;width:1.00px;height:18.36px;background:rgba(0,0,0,0.06)"></div>
<div class="b" style="left:219.20px;top:449.96px;width:1.00px;height:18.36px;background:rgba(0,0,0,0.06)"></div>
<div class="b" style="left:348.10px;top:449.96px;width:1.00px;height:18.36px;background:rgba(0,0,0,0.06)"></div>
<div class="b" style="left:797.00px;top:449.96px;width:1.00px;height:18.36px;background:rgba(0,0,0,0.06)"></div>
<div class="b" style="left:976.60px;top:449.96px;width:1.00px;height:18.36px;background:rgba(0,0,0,0.06)"></div>
<div class="b" style="left:1072.00px;top:449.96px;width:1.00px;height:18.36px;background:rgba(0,0,0,0.06)"></div>
<div class="b" style="left:1168.75px;top:449.96px;width:1.00px;height:18.36px;background:rgba(0,0,0,0.06)"></div>
<div class="b" style="left:24.50px;top:468.32px;width:1435.50px;height:18.36px;background:#2a2b2e"></div>
<div class="t" style="left:56.75px;transform:translateX(-50%) ;transform-origin:0 0;top:472.32px;font-size:10.4px;line-height:13.0px;color:#0b0b0c;-webkit-text-stroke:0.3px currentColor;">13</div>
<div class="t" style="left:154.00px;transform:translateX(-50%) ;transform-origin:0 0;top:472.32px;font-size:10.4px;line-height:13.0px;color:#0b0b0c;-webkit-text-stroke:0.3px currentColor;">13</div>
<div class="t" style="left:283.60px;transform:translateX(-50%) ;transform-origin:0 0;top:472.32px;font-size:10.4px;line-height:13.0px;color:#0b0b0c;-webkit-text-stroke:0.3px currentColor;">7891150086302</div>
<div class="t" style="left:351.50px;top:472.32px;font-size:10.4px;line-height:13.0px;color:#0b0b0c;-webkit-text-stroke:0.3px currentColor;">ACAI PREMIUM 7</div>
<div class="b" style="left:24.50px;top:468.32px;width:1.00px;height:18.36px;background:rgba(0,0,0,0.06)"></div>
<div class="b" style="left:89.00px;top:468.32px;width:1.00px;height:18.36px;background:rgba(0,0,0,0.06)"></div>
<div class="b" style="left:219.20px;top:468.32px;width:1.00px;height:18.36px;background:rgba(0,0,0,0.06)"></div>
<div class="b" style="left:348.10px;top:468.32px;width:1.00px;height:18.36px;background:rgba(0,0,0,0.06)"></div>
<div class="b" style="left:797.00px;top:468.32px;width:1.00px;height:18.36px;background:rgba(0,0,0,0.06)"></div>
<div class="b" style="left:976.60px;top:468.32px;width:1.00px;height:18.36px;background:rgba(0,0,0,0.06)"></div>
<div class="b" style="left:1072.00px;top:468.32px;width:1.00px;height:18.36px;background:rgba(0,0,0,0.06)"></div>
<div class="b" style="left:1168.75px;top:468.32px;width:1.00px;height:18.36px;background:rgba(0,0,0,0.06)"></div>
<div class="b" style="left:24.50px;top:486.68px;width:1435.50px;height:18.36px;background:#2e2f31"></div>
<div class="t" style="left:56.75px;transform:translateX(-50%) ;transform-origin:0 0;top:490.68px;font-size:10.4px;line-height:13.0px;color:#0b0b0c;-webkit-text-stroke:0.3px currentColor;">14</div>
<div class="t" style="left:154.00px;transform:translateX(-50%) ;transform-origin:0 0;top:490.68px;font-size:10.4px;line-height:13.0px;color:#0b0b0c;-webkit-text-stroke:0.3px currentColor;">14</div>
<div class="t" style="left:283.60px;transform:translateX(-50%) ;transform-origin:0 0;top:490.68px;font-size:10.4px;line-height:13.0px;color:#0b0b0c;-webkit-text-stroke:0.3px currentColor;">7898948469316</div>
<div class="t" style="left:351.50px;top:490.68px;font-size:10.4px;line-height:13.0px;color:#0b0b0c;-webkit-text-stroke:0.3px currentColor;">ACENDEDOR DE FOGAO</div>
<div class="b" style="left:24.50px;top:486.68px;width:1.00px;height:18.36px;background:rgba(0,0,0,0.06)"></div>
<div class="b" style="left:89.00px;top:486.68px;width:1.00px;height:18.36px;background:rgba(0,0,0,0.06)"></div>
<div class="b" style="left:219.20px;top:486.68px;width:1.00px;height:18.36px;background:rgba(0,0,0,0.06)"></div>
<div class="b" style="left:348.10px;top:486.68px;width:1.00px;height:18.36px;background:rgba(0,0,0,0.06)"></div>
<div class="b" style="left:797.00px;top:486.68px;width:1.00px;height:18.36px;background:rgba(0,0,0,0.06)"></div>
<div class="b" style="left:976.60px;top:486.68px;width:1.00px;height:18.36px;background:rgba(0,0,0,0.06)"></div>
<div class="b" style="left:1072.00px;top:486.68px;width:1.00px;height:18.36px;background:rgba(0,0,0,0.06)"></div>
<div class="b" style="left:1168.75px;top:486.68px;width:1.00px;height:18.36px;background:rgba(0,0,0,0.06)"></div>
<div class="b" style="left:24.50px;top:505.04px;width:1435.50px;height:18.36px;background:#2a2b2e"></div>
<div class="t" style="left:56.75px;transform:translateX(-50%) ;transform-origin:0 0;top:509.04px;font-size:10.4px;line-height:13.0px;color:#0b0b0c;-webkit-text-stroke:0.3px currentColor;">15</div>
<div class="t" style="left:154.00px;transform:translateX(-50%) ;transform-origin:0 0;top:509.04px;font-size:10.4px;line-height:13.0px;color:#0b0b0c;-webkit-text-stroke:0.3px currentColor;">15</div>
<div class="t" style="left:283.60px;transform:translateX(-50%) ;transform-origin:0 0;top:509.04px;font-size:10.4px;line-height:13.0px;color:#0b0b0c;-webkit-text-stroke:0.3px currentColor;">7896221806964</div>
<div class="t" style="left:351.50px;top:509.04px;font-size:10.4px;line-height:13.0px;color:#0b0b0c;-webkit-text-stroke:0.3px currentColor;">ACETONA MARCA</div>
<div class="b" style="left:24.50px;top:505.04px;width:1.00px;height:18.36px;background:rgba(0,0,0,0.06)"></div>
<div class="b" style="left:89.00px;top:505.04px;width:1.00px;height:18.36px;background:rgba(0,0,0,0.06)"></div>
<div class="b" style="left:219.20px;top:505.04px;width:1.00px;height:18.36px;background:rgba(0,0,0,0.06)"></div>
<div class="b" style="left:348.10px;top:505.04px;width:1.00px;height:18.36px;background:rgba(0,0,0,0.06)"></div>
<div class="b" style="left:797.00px;top:505.04px;width:1.00px;height:18.36px;background:rgba(0,0,0,0.06)"></div>
<div class="b" style="left:976.60px;top:505.04px;width:1.00px;height:18.36px;background:rgba(0,0,0,0.06)"></div>
<div class="b" style="left:1072.00px;top:505.04px;width:1.00px;height:18.36px;background:rgba(0,0,0,0.06)"></div>
<div class="b" style="left:1168.75px;top:505.04px;width:1.00px;height:18.36px;background:rgba(0,0,0,0.06)"></div>
<div class="b" style="left:24.50px;top:523.40px;width:1435.50px;height:18.36px;background:#2e2f31"></div>
<div class="t" style="left:56.75px;transform:translateX(-50%) ;transform-origin:0 0;top:527.40px;font-size:10.4px;line-height:13.0px;color:#0b0b0c;-webkit-text-stroke:0.3px currentColor;">16</div>
<div class="t" style="left:154.00px;transform:translateX(-50%) ;transform-origin:0 0;top:527.40px;font-size:10.4px;line-height:13.0px;color:#0b0b0c;-webkit-text-stroke:0.3px currentColor;">16</div>
<div class="t" style="left:283.60px;transform:translateX(-50%) ;transform-origin:0 0;top:527.40px;font-size:10.4px;line-height:13.0px;color:#0b0b0c;-webkit-text-stroke:0.3px currentColor;">7891000067048</div>
<div class="t" style="left:351.50px;top:527.40px;font-size:10.4px;line-height:13.0px;color:#0b0b0c;-webkit-text-stroke:0.3px currentColor;">ACHOCOLATADO</div>
<div class="b" style="left:24.50px;top:523.40px;width:1.00px;height:18.36px;background:rgba(0,0,0,0.06)"></div>
<div class="b" style="left:89.00px;top:523.40px;width:1.00px;height:18.36px;background:rgba(0,0,0,0.06)"></div>
<div class="b" style="left:219.20px;top:523.40px;width:1.00px;height:18.36px;background:rgba(0,0,0,0.06)"></div>
<div class="b" style="left:348.10px;top:523.40px;width:1.00px;height:18.36px;background:rgba(0,0,0,0.06)"></div>
<div class="b" style="left:797.00px;top:523.40px;width:1.00px;height:18.36px;background:rgba(0,0,0,0.06)"></div>
<div class="b" style="left:976.60px;top:523.40px;width:1.00px;height:18.36px;background:rgba(0,0,0,0.06)"></div>
<div class="b" style="left:1072.00px;top:523.40px;width:1.00px;height:18.36px;background:rgba(0,0,0,0.06)"></div>
<div class="b" style="left:1168.75px;top:523.40px;width:1.00px;height:18.36px;background:rgba(0,0,0,0.06)"></div>
<div class="b" style="left:24.50px;top:541.76px;width:1435.50px;height:18.36px;background:#2a2b2e"></div>
<div class="t" style="left:56.75px;transform:translateX(-50%) ;transform-origin:0 0;top:545.76px;font-size:10.4px;line-height:13.0px;color:#0b0b0c;-webkit-text-stroke:0.3px currentColor;">17</div>
<div class="t" style="left:154.00px;transform:translateX(-50%) ;transform-origin:0 0;top:545.76px;font-size:10.4px;line-height:13.0px;color:#0b0b0c;-webkit-text-stroke:0.3px currentColor;">17</div>
<div class="t" style="left:283.60px;transform:translateX(-50%) ;transform-origin:0 0;top:545.76px;font-size:10.4px;line-height:13.0px;color:#0b0b0c;-webkit-text-stroke:0.3px currentColor;">7891000379691</div>
<div class="t" style="left:351.50px;top:545.76px;font-size:10.4px;line-height:13.0px;color:#0b0b0c;-webkit-text-stroke:0.3px currentColor;">ACHOCOLATADO</div>
<div class="b" style="left:24.50px;top:541.76px;width:1.00px;height:18.36px;background:rgba(0,0,0,0.06)"></div>
<div class="b" style="left:89.00px;top:541.76px;width:1.00px;height:18.36px;background:rgba(0,0,0,0.06)"></div>
<div class="b" style="left:219.20px;top:541.76px;width:1.00px;height:18.36px;background:rgba(0,0,0,0.06)"></div>
<div class="b" style="left:348.10px;top:541.76px;width:1.00px;height:18.36px;background:rgba(0,0,0,0.06)"></div>
<div class="b" style="left:797.00px;top:541.76px;width:1.00px;height:18.36px;background:rgba(0,0,0,0.06)"></div>
<div class="b" style="left:976.60px;top:541.76px;width:1.00px;height:18.36px;background:rgba(0,0,0,0.06)"></div>
<div class="b" style="left:1072.00px;top:541.76px;width:1.00px;height:18.36px;background:rgba(0,0,0,0.06)"></div>
<div class="b" style="left:1168.75px;top:541.76px;width:1.00px;height:18.36px;background:rgba(0,0,0,0.06)"></div>
<div class="b" style="left:24.50px;top:560.12px;width:1435.50px;height:18.36px;background:#2e2f31"></div>
<div class="t" style="left:56.75px;transform:translateX(-50%) ;transform-origin:0 0;top:564.12px;font-size:10.4px;line-height:13.0px;color:#0b0b0c;-webkit-text-stroke:0.3px currentColor;">18</div>
<div class="t" style="left:154.00px;transform:translateX(-50%) ;transform-origin:0 0;top:564.12px;font-size:10.4px;line-height:13.0px;color:#0b0b0c;-webkit-text-stroke:0.3px currentColor;">18</div>
<div class="t" style="left:283.60px;transform:translateX(-50%) ;transform-origin:0 0;top:564.12px;font-size:10.4px;line-height:13.0px;color:#0b0b0c;-webkit-text-stroke:0.3px currentColor;">7891000101926</div>
<div class="t" style="left:351.50px;top:564.12px;font-size:10.4px;line-height:13.0px;color:#0b0b0c;-webkit-text-stroke:0.3px currentColor;">ACHOCOLATADO</div>
<div class="b" style="left:24.50px;top:560.12px;width:1.00px;height:18.36px;background:rgba(0,0,0,0.06)"></div>
<div class="b" style="left:89.00px;top:560.12px;width:1.00px;height:18.36px;background:rgba(0,0,0,0.06)"></div>
<div class="b" style="left:219.20px;top:560.12px;width:1.00px;height:18.36px;background:rgba(0,0,0,0.06)"></div>
<div class="b" style="left:348.10px;top:560.12px;width:1.00px;height:18.36px;background:rgba(0,0,0,0.06)"></div>
<div class="b" style="left:797.00px;top:560.12px;width:1.00px;height:18.36px;background:rgba(0,0,0,0.06)"></div>
<div class="b" style="left:976.60px;top:560.12px;width:1.00px;height:18.36px;background:rgba(0,0,0,0.06)"></div>
<div class="b" style="left:1072.00px;top:560.12px;width:1.00px;height:18.36px;background:rgba(0,0,0,0.06)"></div>
<div class="b" style="left:1168.75px;top:560.12px;width:1.00px;height:18.36px;background:rgba(0,0,0,0.06)"></div>
<div class="b" style="left:24.50px;top:578.48px;width:1435.50px;height:18.36px;background:#2a2b2e"></div>
<div class="t" style="left:56.75px;transform:translateX(-50%) ;transform-origin:0 0;top:582.48px;font-size:10.4px;line-height:13.0px;color:#0b0b0c;-webkit-text-stroke:0.3px currentColor;">19</div>
<div class="t" style="left:154.00px;transform:translateX(-50%) ;transform-origin:0 0;top:582.48px;font-size:10.4px;line-height:13.0px;color:#0b0b0c;-webkit-text-stroke:0.3px currentColor;">19</div>
<div class="t" style="left:283.60px;transform:translateX(-50%) ;transform-origin:0 0;top:582.48px;font-size:10.4px;line-height:13.0px;color:#0b0b0c;-webkit-text-stroke:0.3px currentColor;">7898215151807</div>
<div class="t" style="left:351.50px;top:582.48px;font-size:10.4px;line-height:13.0px;color:#0b0b0c;-webkit-text-stroke:0.3px currentColor;">ACHOCOLATADO</div>
<div class="b" style="left:24.50px;top:578.48px;width:1.00px;height:18.36px;background:rgba(0,0,0,0.06)"></div>
<div class="b" style="left:89.00px;top:578.48px;width:1.00px;height:18.36px;background:rgba(0,0,0,0.06)"></div>
<div class="b" style="left:219.20px;top:578.48px;width:1.00px;height:18.36px;background:rgba(0,0,0,0.06)"></div>
<div class="b" style="left:348.10px;top:578.48px;width:1.00px;height:18.36px;background:rgba(0,0,0,0.06)"></div>
<div class="b" style="left:797.00px;top:578.48px;width:1.00px;height:18.36px;background:rgba(0,0,0,0.06)"></div>
<div class="b" style="left:976.60px;top:578.48px;width:1.00px;height:18.36px;background:rgba(0,0,0,0.06)"></div>
<div class="b" style="left:1072.00px;top:578.48px;width:1.00px;height:18.36px;background:rgba(0,0,0,0.06)"></div>
<div class="b" style="left:1168.75px;top:578.48px;width:1.00px;height:18.36px;background:rgba(0,0,0,0.06)"></div>
<div class="b" style="left:24.50px;top:596.84px;width:1435.50px;height:18.36px;background:#2e2f31"></div>
<div class="t" style="left:56.75px;transform:translateX(-50%) ;transform-origin:0 0;top:600.84px;font-size:10.4px;line-height:13.0px;color:#0b0b0c;-webkit-text-stroke:0.3px currentColor;">20</div>
<div class="t" style="left:154.00px;transform:translateX(-50%) ;transform-origin:0 0;top:600.84px;font-size:10.4px;line-height:13.0px;color:#0b0b0c;-webkit-text-stroke:0.3px currentColor;">20</div>
<div class="t" style="left:283.60px;transform:translateX(-50%) ;transform-origin:0 0;top:600.84px;font-size:10.4px;line-height:13.0px;color:#0b0b0c;-webkit-text-stroke:0.3px currentColor;">10141</div>
<div class="t" style="left:351.50px;top:600.84px;font-size:10.4px;line-height:13.0px;color:#0b0b0c;-webkit-text-stroke:0.3px currentColor;">ACUCAR ALTO ALEGRE</div>
<div class="b" style="left:24.50px;top:596.84px;width:1.00px;height:18.36px;background:rgba(0,0,0,0.06)"></div>
<div class="b" style="left:89.00px;top:596.84px;width:1.00px;height:18.36px;background:rgba(0,0,0,0.06)"></div>
<div class="b" style="left:219.20px;top:596.84px;width:1.00px;height:18.36px;background:rgba(0,0,0,0.06)"></div>
<div class="b" style="left:348.10px;top:596.84px;width:1.00px;height:18.36px;background:rgba(0,0,0,0.06)"></div>
<div class="b" style="left:797.00px;top:596.84px;width:1.00px;height:18.36px;background:rgba(0,0,0,0.06)"></div>
<div class="b" style="left:976.60px;top:596.84px;width:1.00px;height:18.36px;background:rgba(0,0,0,0.06)"></div>
<div class="b" style="left:1072.00px;top:596.84px;width:1.00px;height:18.36px;background:rgba(0,0,0,0.06)"></div>
<div class="b" style="left:1168.75px;top:596.84px;width:1.00px;height:18.36px;background:rgba(0,0,0,0.06)"></div>
<div class="b" style="left:24.50px;top:615.20px;width:1435.50px;height:18.36px;background:#2a2b2e"></div>
<div class="t" style="left:56.75px;transform:translateX(-50%) ;transform-origin:0 0;top:619.20px;font-size:10.4px;line-height:13.0px;color:#0b0b0c;-webkit-text-stroke:0.3px currentColor;">21</div>
<div class="t" style="left:154.00px;transform:translateX(-50%) ;transform-origin:0 0;top:619.20px;font-size:10.4px;line-height:13.0px;color:#0b0b0c;-webkit-text-stroke:0.3px currentColor;">21</div>
<div class="t" style="left:283.60px;transform:translateX(-50%) ;transform-origin:0 0;top:619.20px;font-size:10.4px;line-height:13.0px;color:#0b0b0c;-webkit-text-stroke:0.3px currentColor;">7896508200034</div>
<div class="t" style="left:351.50px;top:619.20px;font-size:10.4px;line-height:13.0px;color:#0b0b0c;-webkit-text-stroke:0.3px currentColor;">ACUCAR REFINADO</div>
<div class="b" style="left:24.50px;top:615.20px;width:1.00px;height:18.36px;background:rgba(0,0,0,0.06)"></div>
<div class="b" style="left:89.00px;top:615.20px;width:1.00px;height:18.36px;background:rgba(0,0,0,0.06)"></div>
<div class="b" style="left:219.20px;top:615.20px;width:1.00px;height:18.36px;background:rgba(0,0,0,0.06)"></div>
<div class="b" style="left:348.10px;top:615.20px;width:1.00px;height:18.36px;background:rgba(0,0,0,0.06)"></div>
<div class="b" style="left:797.00px;top:615.20px;width:1.00px;height:18.36px;background:rgba(0,0,0,0.06)"></div>
<div class="b" style="left:976.60px;top:615.20px;width:1.00px;height:18.36px;background:rgba(0,0,0,0.06)"></div>
<div class="b" style="left:1072.00px;top:615.20px;width:1.00px;height:18.36px;background:rgba(0,0,0,0.06)"></div>
<div class="b" style="left:1168.75px;top:615.20px;width:1.00px;height:18.36px;background:rgba(0,0,0,0.06)"></div>
<div class="b" style="left:24.50px;top:633.56px;width:1435.50px;height:18.36px;background:#2e2f31"></div>
<div class="t" style="left:56.75px;transform:translateX(-50%) ;transform-origin:0 0;top:637.56px;font-size:10.4px;line-height:13.0px;color:#0b0b0c;-webkit-text-stroke:0.3px currentColor;">22</div>
<div class="t" style="left:154.00px;transform:translateX(-50%) ;transform-origin:0 0;top:637.56px;font-size:10.4px;line-height:13.0px;color:#0b0b0c;-webkit-text-stroke:0.3px currentColor;">22</div>
<div class="t" style="left:283.60px;transform:translateX(-50%) ;transform-origin:0 0;top:637.56px;font-size:10.4px;line-height:13.0px;color:#0b0b0c;-webkit-text-stroke:0.3px currentColor;">12283</div>
<div class="t" style="left:351.50px;top:637.56px;font-size:10.4px;line-height:13.0px;color:#0b0b0c;-webkit-text-stroke:0.3px currentColor;">adaptador para tomada</div>
<div class="b" style="left:24.50px;top:633.56px;width:1.00px;height:18.36px;background:rgba(0,0,0,0.06)"></div>
<div class="b" style="left:89.00px;top:633.56px;width:1.00px;height:18.36px;background:rgba(0,0,0,0.06)"></div>
<div class="b" style="left:219.20px;top:633.56px;width:1.00px;height:18.36px;background:rgba(0,0,0,0.06)"></div>
<div class="b" style="left:348.10px;top:633.56px;width:1.00px;height:18.36px;background:rgba(0,0,0,0.06)"></div>
<div class="b" style="left:797.00px;top:633.56px;width:1.00px;height:18.36px;background:rgba(0,0,0,0.06)"></div>
<div class="b" style="left:976.60px;top:633.56px;width:1.00px;height:18.36px;background:rgba(0,0,0,0.06)"></div>
<div class="b" style="left:1072.00px;top:633.56px;width:1.00px;height:18.36px;background:rgba(0,0,0,0.06)"></div>
<div class="b" style="left:1168.75px;top:633.56px;width:1.00px;height:18.36px;background:rgba(0,0,0,0.06)"></div>
<div class="t" style="left:801.60px;top:637.56px;font-size:10.4px;line-height:13.0px;color:#0b0b0c;-webkit-text-stroke:0.3px currentColor;">DIVERSOS</div>
<div class="t" style="left:1006.00px;top:637.56px;font-size:10.4px;line-height:13.0px;color:#0b0b0c;-webkit-text-stroke:0.3px currentColor;">R$ 6,00</div>
<div class="t" style="left:1121.00px;transform:translateX(-50%) ;transform-origin:0 0;top:637.56px;font-size:10.4px;line-height:13.0px;color:#0b0b0c;-webkit-text-stroke:0.3px currentColor;">0</div>
<div class="b" style="left:1573.00px;top:230.80px;width:13.50px;height:431.00px;background:#2b2c2f"></div>
<svg class="b" style="left:1575px;top:235px" width="8" height="5"><path d="M0 5L8 5L4 0Z" fill="#1a1a1b"/></svg>
<svg class="b" style="left:1575px;top:651px" width="8" height="5"><path d="M0 0L8 0L4 5Z" fill="#1a1a1b"/></svg>
<div class="b" style="left:1578.50px;top:259.00px;width:2.00px;height:127.00px;background:#1b1b1c;border-radius:1px"></div>
<div class="b" style="left:18.50px;top:667.50px;width:36.50px;height:18.20px;border:1px solid #22364d;box-sizing:border-box"></div>
<div class="b" style="left:55.00px;top:667.50px;width:44.00px;height:18.20px;border:1px solid #2e2f31;box-sizing:border-box"></div>
<div class="b" style="left:99.00px;top:667.50px;width:39.30px;height:18.20px;border:1px solid #2e2f31;box-sizing:border-box"></div>
<div class="t" style="left:21.00px;top:670.70px;font-size:10.4px;line-height:13.0px;color:#0b0b0c;-webkit-text-stroke:0.3px currentColor;">Ativos</div>
<div class="t" style="left:57.30px;top:670.20px;font-size:10.4px;line-height:13.0px;color:#0b0b0c;-webkit-text-stroke:0.3px currentColor;">Inativos</div>
<div class="t" style="left:102.00px;top:670.20px;font-size:10.4px;line-height:13.0px;color:#0b0b0c;-webkit-text-stroke:0.3px currentColor;">Todos</div>
<div class="b" style="left:16.00px;top:706.70px;width:112.40px;height:42.00px;background:#111112;border-radius:3px;border:1px solid #18181a;box-sizing:border-box"></div>
<div class="t" style="left:61.30px;top:720.54px;font-size:12.0px;line-height:15.0px;color:#303033;-webkit-text-stroke:0.3px currentColor;">F2 | Novo</div>
<div class="b" style="left:134.40px;top:706.70px;width:112.50px;height:42.00px;background:#222223;border-radius:3px;border:1px solid #18181a;box-sizing:border-box"></div>
<div class="t" style="left:175.70px;top:720.54px;font-size:12.0px;line-height:15.0px;color:#242426;-webkit-text-stroke:0.3px currentColor;">F3 | Alterar</div>
<div class="b" style="left:253.00px;top:706.70px;width:112.60px;height:42.00px;background:#111112;border-radius:3px;border:1px solid #18181a;box-sizing:border-box"></div>
<div class="t" style="left:289.60px;top:720.54px;font-size:12.0px;line-height:15.0px;color:#303033;-webkit-text-stroke:0.3px currentColor;">F4 | Imprimir</div>
<div class="b" style="left:372.00px;top:706.70px;width:112.00px;height:42.00px;background:#111112;border-radius:3px;border:1px solid #18181a;box-sizing:border-box"></div>
<div class="t" style="left:407.00px;top:720.54px;font-size:12.0px;line-height:15.0px;color:#303033;-webkit-text-stroke:0.3px currentColor;">F5 | Atualizar</div>
<div class="b" style="left:490.40px;top:706.70px;width:112.30px;height:42.00px;background:#111112;border-radius:3px;border:1px solid #18181a;box-sizing:border-box"></div>
<div class="t" style="left:525.10px;top:720.54px;font-size:12.0px;line-height:15.0px;color:#303033;-webkit-text-stroke:0.3px currentColor;">F7 | Historico</div>
<div class="b" style="left:609.20px;top:706.70px;width:112.20px;height:42.00px;background:#111112;border-radius:3px;border:1px solid #18181a;box-sizing:border-box"></div>
<div class="t" style="left:646.20px;top:720.54px;font-size:12.0px;line-height:15.0px;color:#303033;-webkit-text-stroke:0.3px currentColor;">F8 | Duplicar</div>
<div class="b" style="left:727.70px;top:706.70px;width:112.30px;height:42.00px;background:#111112;border-radius:3px;border:1px solid #18181a;box-sizing:border-box"></div>
<div class="t" style="left:780.90px;top:720.54px;font-size:12.0px;line-height:15.0px;color:#303033;-webkit-text-stroke:0.3px currentColor;">Fechar</div>
<svg class="b" style="left:0;top:0" width="850" height="760"><circle cx="44.2" cy="727.3" r="11" fill="#1e2b38"/><circle cx="44.2" cy="727.3" r="9" fill="#22303d"/><path d="M44.2 720.5 L44.2 734.1 M37.4 727.3 L51 727.3" stroke="#3a3d42" stroke-width="3.6"/><rect x="147.6" y="716.5" width="19" height="15" fill="#2a2a2b"/><rect x="147.6" y="720.25" width="19" height="0.8" fill="#202021"/><rect x="147.6" y="724.00" width="19" height="0.8" fill="#202021"/><rect x="147.6" y="727.75" width="19" height="0.8" fill="#202021"/><rect x="152.35" y="716.5" width="0.8" height="15" fill="#202021"/><rect x="157.10" y="716.5" width="0.8" height="15" fill="#202021"/><rect x="161.85" y="716.5" width="0.8" height="15" fill="#202021"/><path d="M153 737 L169.5 720.5" stroke="#1a1a1b" stroke-width="2.6"/><path d="M153 737 L169.5 720.5" stroke="#2c2c2d" stroke-width="1"/><rect x="265" y="714.5" width="14" height="8" fill="#38393b"/><rect x="260" y="721" width="24" height="11" rx="2" fill="#2e3034"/><rect x="260" y="725" width="24" height="3" fill="#1c1f24"/><rect x="264" y="731" width="16" height="8" fill="#3a3b3d"/><rect x="264" y="735" width="16" height="1.2" fill="#1e3a5a"/><path d="M380 714 L394 714 L399 719 L399 737 L380 737Z" fill="#38393b"/><path d="M394 714 L394 719 L399 719Z" fill="#2a2b2d"/><rect x="383" y="720.0" width="12" height="1" fill="#2a2b2d"/><rect x="383" y="723.0" width="12" height="1" fill="#2a2b2d"/><rect x="383" y="726.0" width="12" height="1" fill="#2a2b2d"/><rect x="383" y="729.0" width="12" height="1" fill="#2a2b2d"/><rect x="383" y="732.0" width="12" height="1" fill="#2a2b2d"/><path d="M391 738 A5.5 5.5 0 0 1 401 733" stroke="#143a14" stroke-width="2.2" fill="none"/><path d="M401 738 A5.5 5.5 0 0 1 391 740" stroke="#143a14" stroke-width="2.2" fill="none"/><circle cx="508.6" cy="727.3" r="10" fill="#1e3246"/><circle cx="509.5" cy="727.8" r="7.6" fill="#2e2f31"/><path d="M509.5 727.8 L504 733.5 M509.5 727.8 L515.5 727" stroke="#0e0e0f" stroke-width="1.1"/><path d="M515.5 727 L516.5 726.9" stroke="#4a1010" stroke-width="1.1"/><path d="M497.5 722 L501 718 L503 723Z" fill="#1e3246"/><rect x="616.6" y="714.5" width="15" height="14" fill="#2e2f31"/><rect x="616.6" y="714.5" width="5" height="3" fill="#4a3a12"/><rect x="616.6" y="721" width="5" height="3" fill="#4a3a12"/><rect x="616.6" y="718.00" width="15" height="0.8" fill="#1e1f21"/><rect x="616.6" y="721.50" width="15" height="0.8" fill="#1e1f21"/><rect x="616.6" y="725.00" width="15" height="0.8" fill="#1e1f21"/><rect x="626.5" y="725" width="13.7" height="14" fill="#3a3b3d"/><rect x="630" y="729" width="6" height="6" fill="none" stroke="#141415" stroke-width="1"/><rect x="632.2" y="731.2" width="3" height="3" fill="#141415"/><rect x="753.6" y="716.7" width="21.5" height="21.5" rx="1.5" fill="#3a0e0c"/><rect x="755" y="718" width="18.7" height="18.7" fill="#46120f"/><path d="M759.5 722.6 L769.2 732.3 M769.2 722.6 L759.5 732.3" stroke="#3e3e40" stroke-width="3"/></svg>
<div class="b" style="left:0.00px;top:775.60px;width:1600.00px;height:5.40px;background:#2b2c2f"></div>
<div class="b" style="left:4.00px;top:761.00px;width:1593.25px;height:14.60px;background:#0a0a0b"></div>
<div class="t" style="left:65.50px;top:762.97px;font-size:9.6px;line-height:12.0px;color:#3b3b3d;-webkit-text-stroke:0.3px currentColor;">Você está na tela de Produtos</div>
<div class="t" style="left:274.25px;top:762.97px;font-size:9.6px;line-height:12.0px;color:#3b3b3d;-webkit-text-stroke:0.3px currentColor;">Empresa: JENNIFER E BERNARDO PADARIA LTDA</div>
<div class="t" style="left:538.75px;top:762.97px;font-size:9.6px;line-height:12.0px;color:#3b3b3d;-webkit-text-stroke:0.3px currentColor;">Usuário: ADMIN</div>
<div class="t" style="left:677.50px;top:762.97px;font-size:9.6px;line-height:12.0px;color:#3b3b3d;-webkit-text-stroke:0.3px currentColor;">IP: 10.0.2.15</div>
<div class="t" style="left:771.00px;top:762.97px;font-size:9.6px;line-height:12.0px;color:#3b3b3d;-webkit-text-stroke:0.3px currentColor;">Atualizado Em: 07/10/2025</div>
<div class="t" style="left:900.40px;top:762.97px;font-size:9.6px;line-height:12.0px;color:#3b3b3d;-webkit-text-stroke:0.3px currentColor;">Versão: 6.4.1.1</div>
<div class="t" style="left:1028.00px;top:762.97px;font-size:9.6px;line-height:12.0px;color:#3b3b3d;-webkit-text-stroke:0.3px currentColor;">Licenciado: 16/10/2030</div>
<div class="b" style="left:0.00px;top:781.00px;width:1600.00px;height:30.00px;background:#0b0b0c"></div>
<svg class="b" style="left:12px;top:791px" width="14" height="14"><rect x="0" y="0" width="6.5" height="6.5" fill="#3a3a3c"/><rect x="7.5" y="0" width="6.5" height="6.5" fill="#3a3a3c"/><rect x="0" y="7.5" width="6.5" height="6.5" fill="#3a3a3c"/><rect x="7.5" y="7.5" width="6.5" height="6.5" fill="#3a3a3c"/></svg>
<div class="b" style="left:39.70px;top:781.00px;width:240.30px;height:30.00px;background:#2b2b2c"></div>
<svg class="b" style="left:49px;top:790px" width="14" height="14"><circle cx="8.5" cy="5.5" r="4.3" stroke="#101011" stroke-width="1.3" fill="none"/><path d="M5.4 8.6L1 13" stroke="#101011" stroke-width="1.4"/></svg>
<div class="t" style="left:73.00px;transform:scaleX(0.9091);transform-origin:0 0;top:790.11px;font-size:12.65px;line-height:15.81px;color:#111112;-webkit-text-stroke:0.3px currentColor;">Pesquisar</div>
<svg class="b" style="left:215px;top:786px" width="60" height="24"><path d="M25 2 Q27 10 35 12 Q27 14 25 22 Q23 14 15 12 Q23 10 25 2Z" fill="#5a4a12"/><path d="M40 12 Q41 16 45 17 Q41 18 40 22 Q39 18 35 17 Q39 16 40 12Z" fill="#5a4a12"/><path d="M6 16 Q7 19 10 19.5 Q7 20 6 23 Q5 20 2 19.5 Q5 19 6 16Z" fill="#1e3a5a"/><circle cx="38" cy="5" r="1.5" fill="#5a2a1a"/><circle cx="54" cy="20" r="1.3" fill="#2a4a1a"/></svg>
<svg class="b" style="left:293px;top:787px" width="20" height="20"><path d="M4 3 Q10 1 12 6 L9 16 Q7 19 4 17 Q1 12 4 3Z" fill="#2a3a6a"/><path d="M16 17 Q10 19 8 14 L11 4 Q13 1 16 3 Q19 8 16 17Z" fill="#5a3a2a"/></svg>
<svg class="b" style="left:333px;top:789px" width="20" height="16"><path d="M0 1 L7 1 L9 3 L20 3 L20 16 L0 16Z" fill="#5a4512"/><rect x="6" y="9" width="8" height="7" fill="#1a3a5a"/></svg>
<div class="b" style="left:363.75px;top:781.00px;width:40.00px;height:30.00px;background:#1f1f20"></div>
<svg class="b" style="left:374px;top:787px" width="20" height="20"><circle cx="10" cy="10" r="8.5" stroke="#3d3d3f" stroke-width="1.6" fill="#0c0c0d"/><path d="M8 6 Q6.3 10 8 14 M12 6 Q13.7 10 12 14" stroke="#1a4a52" stroke-width="1.3" fill="none"/></svg>
<svg class="b" style="left:1424px;top:794px" width="12" height="7"><path d="M1 6L6 1L11 6" stroke="#3d3d3f" stroke-width="1.1" fill="none"/></svg>
<svg class="b" style="left:1444px;top:791px" width="13" height="13"><rect x="1" y="4" width="7" height="5.5" rx="1.2" stroke="#3d3d3f" fill="none"/><path d="M8 6L11 4.5L11 9L8 7.5" stroke="#3d3d3f" fill="none"/><path d="M3 2 Q5 0.5 7 2 M3 11.5 Q5 13 7 11.5" stroke="#3d3d3f" fill="none"/></svg>
<svg class="b" style="left:1463px;top:791px" width="15" height="13"><rect x="4.5" y="2.5" width="10" height="7" stroke="#3d3d3f" fill="none"/><path d="M9.5 9.5L9.5 12M6.5 12L12.5 12M1.5 1.5L4.5 1.5L4.5 5M2 5 L2 10" stroke="#3d3d3f" fill="none"/></svg>
<svg class="b" style="left:1482px;top:791px" width="16" height="13"><path d="M1 4.5L4 4.5L8 1.5L8 11.5L4 8.5L1 8.5Z" stroke="#3d3d3f" fill="none"/><path d="M10 4 Q11.5 6.5 10 9 M12 2.5 Q14.5 6.5 12 10.5 M14 1 Q17 6.5 14 12" stroke="#3d3d3f" fill="none"/></svg>
<div class="t" style="left:1529.00px;transform:translateX(-50%) ;transform-origin:0 0;top:783.48px;font-size:9.8px;line-height:12.25px;color:#3d3d3f;-webkit-text-stroke:0.3px currentColor;">11:34</div>
<div class="t" style="left:1529.00px;transform:translateX(-50%) ;transform-origin:0 0;top:798.48px;font-size:9.8px;line-height:12.25px;color:#3d3d3f;-webkit-text-stroke:0.3px currentColor;">27/10/2025</div>
<svg class="b" style="left:1567px;top:790px" width="16" height="15"><path d="M1.5 1.5L14.5 1.5L14.5 11L9 11 L6 14L6 11L1.5 11Z" stroke="#3d3d3f" fill="none"/></svg>
<div class="b" style="left:1598.00px;top:761.00px;width:2.00px;height:20.00px;background:#202123"></div>
<div class="b" style="left:432.00px;top:138.50px;width:738.00px;height:500.50px;background:#17181a;border-radius:6px 6px 5px 5px;opacity:0.45"></div>
<div class="b" style="left:433.00px;top:139.50px;width:736.00px;height:498.50px;background:#ffffff;border-radius:5px 5px 4px 4px;overflow:hidden"></div>
<div class="b" style="left:433.00px;top:139.50px;width:736.00px;height:26.00px;background:#6b7a98;border-radius:5px 5px 0 0"></div>
<div class="b" style="left:438.00px;top:139.50px;width:726.00px;height:1.00px;background:#7787a6"></div>
<div class="b" style="left:433.00px;top:165.00px;width:736.00px;height:1.00px;background:#56647f"></div>
<div class="b" style="left:434.00px;top:166.00px;width:734.00px;height:471.00px;background:#eef3fb"></div>
<div class="t" style="left:438.00px;transform:scaleX(0.9259);transform-origin:0 0;top:147.12px;font-size:10.476px;line-height:13.1px;color:#f2f4f8;-webkit-text-stroke:0.12px currentColor;">Cadastro de Produtos</div>
<svg class="b" style="left:1144.5px;top:148.2px" width="9" height="9"><path d="M0.5 0.5L8.5 8.5M8.5 0.5L0.5 8.5" stroke="#f4f6fa" stroke-width="1.1"/></svg>
<div class="b" style="left:446.25px;top:181.50px;width:526.25px;height:40.70px;border:1px solid #c8d2de;box-sizing:border-box;border-radius:1px"></div>
<div class="t" style="left:450.40px;top:177.20px;height:10px;background:#eef3fb;font-size:9.0px;line-height:10px;color:transparent;padding:0 1.5px">Selecione empresa</div>
<div class="t" style="left:451.90px;transform:scaleX(0.9259);transform-origin:0 0;top:175.76px;font-size:9.72px;line-height:12.15px;color:#1e1e28;-webkit-text-stroke:0.12px currentColor;">Selecione empresa</div>
<div class="t" style="left:780.60px;transform:scaleX(0.9259);transform-origin:0 0;top:182.46px;font-size:9.72px;line-height:12.15px;color:#1e1e28;-webkit-text-stroke:0.12px currentColor;">Este produto foi cadastrado em</div>
<div class="t" style="right:640.00px;transform:scaleX(0.9259);transform-origin:100% 0;top:182.46px;font-size:9.72px;line-height:12.15px;color:#1e1e28;-webkit-text-stroke:0.12px currentColor;">17/10/2024</div>
<div class="b" style="left:457.00px;top:195.40px;width:503.00px;height:17.10px;background:#fff;border:1px solid #676767;box-shadow:inset 1px 1px 0 #b8b8b8;box-sizing:border-box"></div>
<div class="t" style="left:458.75px;transform:scaleX(0.8696);transform-origin:0 0;top:197.28px;font-size:10.005px;line-height:12.51px;color:#111;font-weight:700;-webkit-text-stroke:0.12px currentColor;">BORCELLE AÇAI</div>
<svg class="b" style="left:993px;top:185px" width="25" height="26" viewBox="0 0 25 26"><defs><linearGradient id="pg" x1="0" y1="0" x2="1" y2="0.3"><stop offset="0" stop-color="#b3e5fc"/><stop offset="1" stop-color="#4fc3f7"/></linearGradient></defs><path d="M3.5 7.8 L7.2 1 L11 4 L14.4 1.4 L17.5 3.4 L21.5 7.8Z" fill="url(#pg)"/><path d="M1.1 7.8 L3.8 4 L5.2 4 L4.2 7.8Z" fill="#c77700"/><path d="M23.9 7.8 L21.2 4 L19.8 4 L20.8 7.8Z" fill="#c77700"/><path d="M1.1 7.7 L23.9 7.7 L23.9 23.8 Q23.9 25.2 22.5 25.2 L2.5 25.2 Q1.1 25.2 1.1 23.8Z" fill="#ff9800"/><rect x="9.5" y="10.5" width="6" height="1.5" rx="0.7" fill="#7a4a00"/></svg>
<div class="t" style="left:1030.80px;transform:scaleX(0.9259);transform-origin:0 0;top:184.31px;font-size:23.976px;line-height:29.97px;color:#7a7a7a;font-weight:700;-webkit-text-stroke:0.12px currentColor;">Produtos</div>
<div class="t" style="left:457.90px;transform:scaleX(0.9259);transform-origin:0 0;top:236.16px;font-size:9.72px;line-height:12.15px;color:#1e1e28;-webkit-text-stroke:0.12px currentColor;">Código</div>
<div class="t" style="left:490.60px;transform:scaleX(0.9259);transform-origin:0 0;top:236.76px;font-size:9.72px;line-height:12.15px;color:#1e1e28;-webkit-text-stroke:0.12px currentColor;">Descrição</div>
<div class="t" style="left:855.00px;transform:scaleX(0.9259);transform-origin:0 0;top:238.36px;font-size:9.72px;line-height:12.15px;color:#1e1e28;-webkit-text-stroke:0.12px currentColor;">Código de Barras</div>
<div class="t" style="left:966.00px;transform:scaleX(0.9259);transform-origin:0 0;top:238.36px;font-size:9.72px;line-height:12.15px;color:#1e1e28;-webkit-text-stroke:0.12px currentColor;">Cód. Barras (Caixa)</div>
<div class="t" style="left:1070.80px;transform:scaleX(0.9259);transform-origin:0 0;top:238.36px;font-size:9.72px;line-height:12.15px;color:#1e1e28;-webkit-text-stroke:0.12px currentColor;">Referência</div>
<div class="b" style="left:456.25px;top:251.50px;width:32.25px;height:17.25px;background:#fff;border:1px solid #bcc7d6;border-radius:1.5px;box-sizing:border-box"></div>
<div class="t" style="right:1114.00px;transform:scaleX(0.9259);transform-origin:100% 0;top:253.87px;font-size:9.936px;line-height:12.42px;color:#1e1e1e;-webkit-text-stroke:0.12px currentColor;">4</div>
<div class="b" style="left:491.00px;top:251.50px;width:357.75px;height:17.25px;background:#fff;border:1px solid #676767;box-shadow:inset 1px 1px 0 #b8b8b8;box-sizing:border-box"></div>
<div class="t" style="left:493.10px;transform:scaleX(0.9259);transform-origin:0 0;top:253.87px;font-size:9.936px;line-height:12.42px;color:#1e1e1e;-webkit-text-stroke:0.12px currentColor;">ABSOLUT CITRON 750ML</div>
<div class="b" style="left:603.60px;top:254.00px;width:1.00px;height:12.00px;background:#111"></div>
<div class="b" style="left:854.40px;top:251.50px;width:86.20px;height:17.25px;background:#fff;border:1px solid #676767;box-shadow:inset 1px 1px 0 #b8b8b8;box-sizing:border-box"></div>
<div class="t" style="left:856.30px;transform:scaleX(0.9259);transform-origin:0 0;top:253.87px;font-size:9.936px;line-height:12.42px;color:#1e1e1e;-webkit-text-stroke:0.12px currentColor;">7312040090754</div>
<div class="b" style="left:943.00px;top:252.00px;width:16.75px;height:18.00px;background:#cbd8e5;border-radius:4px"></div>
<div class="b" style="left:945.40px;top:255.00px;width:11.95px;height:12.00px;background:#ffffff;border-radius:1px"></div>
<svg class="b" style="left:945.88px;top:255.50px" width="11" height="11" viewBox="0 0 11 11"><rect x="0.5" y="8.5" width="8" height="2" fill="#e4e8ee"/><circle cx="4.3" cy="4.3" r="3.3" fill="#fbe6c0" stroke="#c9cdd3" stroke-width="1"/><circle cx="3.6" cy="3.6" r="1.2" fill="#f5b860"/><path d="M6.6 6.6L10 10" stroke="#2f7fb8" stroke-width="2" stroke-linecap="round"/></svg>
<div class="b" style="left:965.40px;top:251.50px;width:100.00px;height:17.25px;background:#fff;border:1px solid #676767;box-shadow:inset 1px 1px 0 #b8b8b8;box-sizing:border-box"></div>
<div class="b" style="left:1070.30px;top:251.50px;width:77.70px;height:17.25px;background:#fff;border:1px solid #676767;box-shadow:inset 1px 1px 0 #b8b8b8;box-sizing:border-box"></div>
<div class="t" style="left:1071.50px;transform:scaleX(0.9259);transform-origin:0 0;top:253.87px;font-size:9.936px;line-height:12.42px;color:#1e1e1e;-webkit-text-stroke:0.12px currentColor;">4</div>
<div class="t" style="left:455.25px;transform:scaleX(0.9259);transform-origin:0 0;top:273.66px;font-size:9.72px;line-height:12.15px;color:#1e1e28;-webkit-text-stroke:0.12px currentColor;">Tipo de Produto</div>
<div class="t" style="left:685.60px;transform:scaleX(0.9259);transform-origin:0 0;top:274.56px;font-size:9.72px;line-height:12.15px;color:#1e1e28;-webkit-text-stroke:0.12px currentColor;">F2 | Marca</div>
<div class="t" style="left:880.60px;transform:scaleX(0.9259);transform-origin:0 0;top:275.31px;font-size:9.72px;line-height:12.15px;color:#1e1e28;-webkit-text-stroke:0.12px currentColor;">F2 | Grupo</div>
<div class="t" style="left:1069.90px;transform:scaleX(0.9259);transform-origin:0 0;top:273.96px;font-size:9.72px;line-height:12.15px;color:#1e1e28;-webkit-text-stroke:0.12px currentColor;">F2 | Unidade</div>
<div class="b" style="left:456.25px;top:287.25px;width:225.00px;height:18.00px;background:#fff;border:1px solid #bcc7d6;border-radius:1.5px;box-sizing:border-box"></div>
<div class="t" style="left:459.75px;transform:scaleX(0.9259);transform-origin:0 0;top:290.00px;font-size:9.936px;line-height:12.42px;color:#1e1e1e;-webkit-text-stroke:0.12px currentColor;">00-MERCADORIA PARA REVENDA</div>
<svg class="b" style="left:668.50px;top:293.75px" width="9" height="5"><path d="M0.5 0.5L4.5 4.5L8.5 0.5" stroke="#7b8696" stroke-width="1" fill="none"/></svg>
<div class="b" style="left:686.25px;top:288.10px;width:172.50px;height:17.50px;background:#fff;border:1px solid #676767;box-shadow:inset 1px 1px 0 #b8b8b8;box-sizing:border-box"></div>
<div class="t" style="left:689.75px;transform:scaleX(0.9259);transform-origin:0 0;top:290.60px;font-size:9.936px;line-height:12.42px;color:#1e1e1e;-webkit-text-stroke:0.12px currentColor;">DIVERSOS</div>
<svg class="b" style="left:847.10px;top:294.35px" width="9" height="5"><path d="M0.5 0.5L4.5 4.5L8.5 0.5" stroke="#7b8696" stroke-width="1" fill="none"/></svg>
<div class="b" style="left:863.00px;top:288.75px;width:15.75px;height:16.85px;background:#cbd8e5;border-radius:4px"></div>
<div class="b" style="left:865.40px;top:291.75px;width:10.95px;height:10.85px;background:#ffffff;border-radius:1px"></div>
<svg class="b" style="left:865.38px;top:291.68px" width="11" height="11" viewBox="0 0 11 11"><rect x="0.5" y="8.5" width="8" height="2" fill="#e4e8ee"/><circle cx="4.3" cy="4.3" r="3.3" fill="#fbe6c0" stroke="#c9cdd3" stroke-width="1"/><circle cx="3.6" cy="3.6" r="1.2" fill="#f5b860"/><path d="M6.6 6.6L10 10" stroke="#2f7fb8" stroke-width="2" stroke-linecap="round"/></svg>
<div class="b" style="left:882.10px;top:288.10px;width:164.65px;height:17.50px;background:#fff;border:1px solid #676767;box-shadow:inset 1px 1px 0 #b8b8b8;box-sizing:border-box"></div>
<div class="t" style="left:885.60px;transform:scaleX(0.9259);transform-origin:0 0;top:290.60px;font-size:9.936px;line-height:12.42px;color:#1e1e1e;-webkit-text-stroke:0.12px currentColor;">DIVERSOS</div>
<svg class="b" style="left:1034.90px;top:294.35px" width="9" height="5"><path d="M0.5 0.5L4.5 4.5L8.5 0.5" stroke="#7b8696" stroke-width="1" fill="none"/></svg>
<div class="b" style="left:1048.90px;top:288.75px;width:16.85px;height:16.85px;background:#cbd8e5;border-radius:4px"></div>
<div class="b" style="left:1051.30px;top:291.75px;width:12.05px;height:10.85px;background:#ffffff;border-radius:1px"></div>
<svg class="b" style="left:1051.83px;top:291.68px" width="11" height="11" viewBox="0 0 11 11"><rect x="0.5" y="8.5" width="8" height="2" fill="#e4e8ee"/><circle cx="4.3" cy="4.3" r="3.3" fill="#fbe6c0" stroke="#c9cdd3" stroke-width="1"/><circle cx="3.6" cy="3.6" r="1.2" fill="#f5b860"/><path d="M6.6 6.6L10 10" stroke="#2f7fb8" stroke-width="2" stroke-linecap="round"/></svg>
<div class="b" style="left:1070.60px;top:288.40px;width:57.30px;height:17.20px;background:#fff;border:1px solid #676767;box-shadow:inset 1px 1px 0 #b8b8b8;box-sizing:border-box"></div>
<div class="t" style="left:1074.10px;transform:scaleX(0.9259);transform-origin:0 0;top:290.75px;font-size:9.936px;line-height:12.42px;color:#1e1e1e;-webkit-text-stroke:0.12px currentColor;">UN</div>
<svg class="b" style="left:1116.20px;top:294.50px" width="9" height="5"><path d="M0.5 0.5L4.5 4.5L8.5 0.5" stroke="#7b8696" stroke-width="1" fill="none"/></svg>
<div class="b" style="left:1130.20px;top:288.75px;width:17.80px;height:16.85px;background:#cbd8e5;border-radius:4px"></div>
<div class="b" style="left:1132.60px;top:291.75px;width:13.00px;height:10.85px;background:#ffffff;border-radius:1px"></div>
<svg class="b" style="left:1133.60px;top:291.68px" width="11" height="11" viewBox="0 0 11 11"><rect x="0.5" y="8.5" width="8" height="2" fill="#e4e8ee"/><circle cx="4.3" cy="4.3" r="3.3" fill="#fbe6c0" stroke="#c9cdd3" stroke-width="1"/><circle cx="3.6" cy="3.6" r="1.2" fill="#f5b860"/><path d="M6.6 6.6L10 10" stroke="#2f7fb8" stroke-width="2" stroke-linecap="round"/></svg>
<div class="t" style="left:455.60px;transform:scaleX(0.9259);transform-origin:0 0;top:311.46px;font-size:9.72px;line-height:12.15px;color:#1e1e28;-webkit-text-stroke:0.12px currentColor;">Preço Compra</div>
<div class="t" style="left:521.00px;transform:scaleX(0.9259);transform-origin:0 0;top:311.46px;font-size:9.72px;line-height:12.15px;color:#1e1e28;-webkit-text-stroke:0.12px currentColor;">% Custos</div>
<div class="t" style="left:561.90px;transform:scaleX(0.9259);transform-origin:0 0;top:311.46px;font-size:9.72px;line-height:12.15px;color:#1e1e28;-webkit-text-stroke:0.12px currentColor;">Preço Custo</div>
<div class="t" style="left:630.00px;transform:scaleX(0.9259);transform-origin:0 0;top:311.46px;font-size:9.72px;line-height:12.15px;color:#1e1e28;-webkit-text-stroke:0.12px currentColor;">% Lucro</div>
<div class="t" style="left:682.50px;transform:scaleX(0.9259);transform-origin:0 0;top:311.46px;font-size:9.72px;line-height:12.15px;color:#1e1e28;-webkit-text-stroke:0.12px currentColor;">Preço Venda</div>
<div class="t" style="left:746.25px;transform:scaleX(0.9259);transform-origin:0 0;top:311.46px;font-size:9.72px;line-height:12.15px;color:#1e1e28;-webkit-text-stroke:0.12px currentColor;">Qtd.Atacado</div>
<div class="t" style="left:799.60px;transform:scaleX(0.9259);transform-origin:0 0;top:311.46px;font-size:9.72px;line-height:12.15px;color:#1e1e28;-webkit-text-stroke:0.12px currentColor;">Pr.Atacado</div>
<div class="t" style="left:865.60px;transform:scaleX(0.9259);transform-origin:0 0;top:311.46px;font-size:9.72px;line-height:12.15px;color:#1e1e28;-webkit-text-stroke:0.12px currentColor;">Comissão %</div>
<div class="t" style="left:919.75px;transform:scaleX(0.9259);transform-origin:0 0;top:311.46px;font-size:9.72px;line-height:12.15px;color:#1e1e28;-webkit-text-stroke:0.12px currentColor;">Desconto %</div>
<div class="t" style="left:1019.80px;transform:scaleX(0.9259);transform-origin:0 0;top:310.46px;font-size:9.72px;line-height:12.15px;color:#1e1e28;-webkit-text-stroke:0.12px currentColor;">Localização</div>
<div class="b" style="left:457.10px;top:325.25px;width:61.90px;height:16.85px;background:#fff;border:1px solid #bcc7d6;border-radius:1.5px;box-sizing:border-box"></div>
<div class="t" style="right:1083.75px;transform:scaleX(0.9259);transform-origin:100% 0;top:327.42px;font-size:9.936px;line-height:12.42px;color:#1e1e1e;-webkit-text-stroke:0.12px currentColor;">65,11</div>
<div class="b" style="left:521.25px;top:325.25px;width:39.00px;height:16.85px;background:#fff;border:1px solid #bcc7d6;border-radius:1.5px;box-sizing:border-box"></div>
<div class="b" style="left:563.10px;top:325.25px;width:64.40px;height:16.85px;background:#fff;border:1px solid #bcc7d6;border-radius:1.5px;box-sizing:border-box"></div>
<div class="b" style="left:630.00px;top:325.25px;width:51.25px;height:16.85px;background:#fff;border:1px solid #bcc7d6;border-radius:1.5px;box-sizing:border-box"></div>
<div class="t" style="right:921.50px;transform:scaleX(0.9259);transform-origin:100% 0;top:327.42px;font-size:9.936px;line-height:12.42px;color:#1e1e1e;-webkit-text-stroke:0.12px currentColor;">20,60</div>
<div class="b" style="left:683.10px;top:325.25px;width:62.30px;height:16.85px;background:#fff;border:1px solid #bcc7d6;border-radius:1.5px;box-sizing:border-box"></div>
<div class="t" style="right:857.35px;transform:scaleX(0.9259);transform-origin:100% 0;top:327.42px;font-size:9.936px;line-height:12.42px;color:#1e1e1e;-webkit-text-stroke:0.12px currentColor;">82,00</div>
<div class="b" style="left:747.25px;top:325.25px;width:50.25px;height:16.85px;background:#fff;border:1px solid #bcc7d6;border-radius:1.5px;box-sizing:border-box"></div>
<div class="t" style="right:805.25px;transform:scaleX(0.9259);transform-origin:100% 0;top:327.42px;font-size:9.936px;line-height:12.42px;color:#1e1e1e;-webkit-text-stroke:0.12px currentColor;">0</div>
<div class="b" style="left:799.40px;top:325.25px;width:65.85px;height:16.85px;background:#fff;border:1px solid #bcc7d6;border-radius:1.5px;box-sizing:border-box"></div>
<div class="t" style="right:737.50px;transform:scaleX(0.9259);transform-origin:100% 0;top:327.42px;font-size:9.936px;line-height:12.42px;color:#1e1e1e;-webkit-text-stroke:0.12px currentColor;">0,00</div>
<div class="b" style="left:868.10px;top:325.25px;width:50.40px;height:16.85px;background:#fff;border:1px solid #bcc7d6;border-radius:1.5px;box-sizing:border-box"></div>
<div class="t" style="right:684.25px;transform:scaleX(0.9259);transform-origin:100% 0;top:327.42px;font-size:9.936px;line-height:12.42px;color:#1e1e1e;-webkit-text-stroke:0.12px currentColor;">0,00</div>
<div class="b" style="left:920.60px;top:325.25px;width:48.15px;height:16.85px;background:#fff;border:1px solid #bcc7d6;border-radius:1.5px;box-sizing:border-box"></div>
<div class="t" style="right:634.00px;transform:scaleX(0.9259);transform-origin:100% 0;top:327.42px;font-size:9.936px;line-height:12.42px;color:#1e1e1e;-webkit-text-stroke:0.12px currentColor;">0,00</div>
<div class="b" style="left:970.60px;top:325.30px;width:177.40px;height:17.10px;background:#fff;border:1px solid #676767;box-shadow:inset 1px 1px 0 #b8b8b8;box-sizing:border-box"></div>
<div class="t" style="left:456.50px;transform:scaleX(0.9259);transform-origin:0 0;top:345.56px;font-size:9.72px;line-height:12.15px;color:#1e1e28;-webkit-text-stroke:0.12px currentColor;">Estoque Minímo</div>
<div class="t" style="left:524.00px;transform:scaleX(0.9259);transform-origin:0 0;top:345.56px;font-size:9.72px;line-height:12.15px;color:#1e1e28;-webkit-text-stroke:0.12px currentColor;">Estoque Inicial</div>
<div class="t" style="left:592.75px;transform:scaleX(0.9259);transform-origin:0 0;top:345.56px;font-size:9.72px;line-height:12.15px;color:#1e1e28;-webkit-text-stroke:0.12px currentColor;">Estoque Atual</div>
<div class="t" style="left:662.75px;transform:scaleX(0.9259);transform-origin:0 0;top:345.56px;font-size:9.72px;line-height:12.15px;color:#1e1e28;-webkit-text-stroke:0.12px currentColor;">Peso (KG)</div>
<div class="t" style="left:731.90px;transform:scaleX(0.9259);transform-origin:0 0;top:345.56px;font-size:9.72px;line-height:12.15px;color:#1e1e28;-webkit-text-stroke:0.12px currentColor;">NCM</div>
<div class="t" style="left:1082.90px;transform:scaleX(0.9259);transform-origin:0 0;top:345.26px;font-size:9.72px;line-height:12.15px;color:#1e1e28;-webkit-text-stroke:0.12px currentColor;">CEST</div>
<div class="b" style="left:456.25px;top:358.50px;width:66.25px;height:17.10px;background:#fff;border:1px solid #bcc7d6;border-radius:1.5px;box-sizing:border-box"></div>
<div class="t" style="right:1080.25px;transform:scaleX(0.9259);transform-origin:100% 0;top:360.80px;font-size:9.936px;line-height:12.42px;color:#1e1e1e;-webkit-text-stroke:0.12px currentColor;">0</div>
<div class="b" style="left:524.40px;top:358.50px;width:66.20px;height:17.10px;background:#fff;border:1px solid #bcc7d6;border-radius:1.5px;box-sizing:border-box"></div>
<div class="b" style="left:593.00px;top:358.50px;width:66.40px;height:17.10px;background:#fff;border:1px solid #bcc7d6;border-radius:1.5px;box-sizing:border-box"></div>
<div class="t" style="right:943.35px;transform:scaleX(0.9259);transform-origin:100% 0;top:360.80px;font-size:9.936px;line-height:12.42px;color:#1e1e1e;-webkit-text-stroke:0.12px currentColor;">0</div>
<div class="b" style="left:663.10px;top:358.50px;width:66.30px;height:17.10px;background:#fff;border:1px solid #bcc7d6;border-radius:1.5px;box-sizing:border-box"></div>
<div class="b" style="left:731.60px;top:358.10px;width:53.15px;height:17.50px;background:#fff;border:1px solid #676767;box-shadow:inset 1px 1px 0 #b8b8b8;box-sizing:border-box"></div>
<div class="t" style="left:733.20px;transform:scaleX(0.9259);transform-origin:0 0;top:360.60px;font-size:9.936px;line-height:12.42px;color:#1e1e1e;-webkit-text-stroke:0.12px currentColor;">19059090</div>
<div class="b" style="left:787.50px;top:358.10px;width:292.00px;height:17.50px;background:#fff;border:1px solid #676767;box-shadow:inset 1px 1px 0 #b8b8b8;box-sizing:border-box"></div>
<div class="b" style="left:788.5px;top:359px;width:274px;height:16px;overflow:hidden"><div class="t" style="left:2.5px;top:2.36px;font-size:9.2px;line-height:11.5px;color:#1e1e1e">Outs.prods.de padaria,pastelaria,inds.de biscoitos,etc. - outros</div></div>
<svg class="b" style="left:1067.80px;top:364.50px" width="9" height="5"><path d="M0.5 0.5L4.5 4.5L8.5 0.5" stroke="#7b8696" stroke-width="1" fill="none"/></svg>
<div class="b" style="left:1085.00px;top:359.30px;width:64.80px;height:17.40px;background:#fff;border:1px solid #676767;box-shadow:inset 1px 1px 0 #b8b8b8;box-sizing:border-box"></div>
<div class="b" style="left:456.25px;top:381.00px;width:46.25px;height:16.50px;background:#cdd9e6;border-radius:2px 2px 0 0"></div>
<div class="t" style="left:460.60px;transform:scaleX(0.9259);transform-origin:0 0;top:383.06px;font-size:9.72px;line-height:12.15px;color:#1e1e28;-webkit-text-stroke:0.12px currentColor;">Impostos</div>
<div class="t" style="left:507.25px;transform:scaleX(0.9259);transform-origin:0 0;top:383.36px;font-size:9.72px;line-height:12.15px;color:#4e5666;-webkit-text-stroke:0.12px currentColor;">Promoção</div>
<div class="t" style="left:556.90px;transform:scaleX(0.9259);transform-origin:0 0;top:383.36px;font-size:9.72px;line-height:12.15px;color:#4e5666;-webkit-text-stroke:0.12px currentColor;">Adicionais</div>
<div class="t" style="left:605.60px;transform:scaleX(0.9259);transform-origin:0 0;top:383.36px;font-size:9.72px;line-height:12.15px;color:#4e5666;-webkit-text-stroke:0.12px currentColor;">Balança</div>
<div class="t" style="left:646.90px;transform:scaleX(0.9259);transform-origin:0 0;top:383.36px;font-size:9.72px;line-height:12.15px;color:#4e5666;-webkit-text-stroke:0.12px currentColor;">Combustivel</div>
<div class="t" style="left:705.00px;transform:scaleX(0.9259);transform-origin:0 0;top:383.36px;font-size:9.72px;line-height:12.15px;color:#4e5666;-webkit-text-stroke:0.12px currentColor;">Ultimos Preços</div>
<div class="b" style="left:454.40px;top:397.50px;width:464.80px;height:167.50px;border:1px solid #c9d4e0;box-sizing:border-box;background:#edf2f9"></div>
<div class="b" style="left:460.30px;top:409.70px;width:107.30px;height:138.60px;border:1px solid #c8d2de;box-sizing:border-box;border-radius:1px"></div>
<div class="t" style="left:465.30px;top:404.80px;height:10px;background:#eef3fb;font-size:9.0px;line-height:10px;color:transparent;padding:0 1.5px">ICMS Interno</div>
<div class="t" style="left:466.80px;transform:scaleX(0.9259);transform-origin:0 0;top:403.36px;font-size:9.72px;line-height:12.15px;color:#1e1e28;-webkit-text-stroke:0.12px currentColor;">ICMS Interno</div>
<div class="t" style="right:1104.40px;transform:scaleX(0.9259);transform-origin:100% 0;top:426.46px;font-size:9.72px;line-height:12.15px;color:#1e1e28;-webkit-text-stroke:0.12px currentColor;">CFOP</div>
<div class="b" style="left:500.10px;top:424.35px;width:29.40px;height:17.25px;background:#fff;border:1px solid #676767;box-shadow:inset 1px 1px 0 #b8b8b8;box-sizing:border-box"></div>
<div class="t" style="left:502.00px;transform:scaleX(0.9259);transform-origin:0 0;top:426.72px;font-size:9.936px;line-height:12.42px;color:#1e1e1e;-webkit-text-stroke:0.12px currentColor;">5102</div>
<div class="t" style="right:1103.90px;transform:scaleX(0.9259);transform-origin:100% 0;top:449.76px;font-size:9.72px;line-height:12.15px;color:#1e1e28;-webkit-text-stroke:0.12px currentColor;">Origem</div>
<div class="b" style="left:500.10px;top:447.20px;width:29.40px;height:17.00px;background:#fff;border:1px solid #bcc7d6;border-radius:1.5px;box-sizing:border-box"></div>
<div class="t" style="right:1105.30px;transform:scaleX(0.9259);transform-origin:100% 0;top:473.76px;font-size:9.72px;line-height:12.15px;color:#1e1e28;-webkit-text-stroke:0.12px currentColor;">CST</div>
<div class="b" style="left:500.25px;top:471.20px;width:29.15px;height:17.40px;background:#fff;border:1px solid #676767;box-shadow:inset 1px 1px 0 #b8b8b8;box-sizing:border-box"></div>
<div class="t" style="left:501.85px;transform:scaleX(0.9259);transform-origin:0 0;top:473.65px;font-size:9.936px;line-height:12.42px;color:#1e1e1e;-webkit-text-stroke:0.12px currentColor;">041</div>
<svg class="b" style="left:538.70px;top:473.80px" width="11" height="11" viewBox="0 0 11 11"><rect x="0.5" y="8.5" width="8" height="2" fill="#e4e8ee"/><circle cx="4.3" cy="4.3" r="3.3" fill="#fbe6c0" stroke="#c9cdd3" stroke-width="1"/><circle cx="3.6" cy="3.6" r="1.2" fill="#f5b860"/><path d="M6.6 6.6L10 10" stroke="#2f7fb8" stroke-width="2" stroke-linecap="round"/></svg>
<div class="t" style="right:1104.50px;transform:scaleX(0.9259);transform-origin:100% 0;top:498.96px;font-size:9.72px;line-height:12.15px;color:#1e1e28;-webkit-text-stroke:0.12px currentColor;">CSOSN</div>
<div class="b" style="left:500.25px;top:496.50px;width:49.75px;height:17.10px;background:#fff;border:1px solid #bcc7d6;border-radius:1.5px;box-sizing:border-box"></div>
<div class="t" style="left:503.75px;transform:scaleX(0.9259);transform-origin:0 0;top:498.80px;font-size:9.936px;line-height:12.42px;color:#1e1e1e;-webkit-text-stroke:0.12px currentColor;">102</div>
<svg class="b" style="left:538.30px;top:502.55px" width="9" height="5"><path d="M0.5 0.5L4.5 4.5L8.5 0.5" stroke="#7b8696" stroke-width="1" fill="none"/></svg>
<div class="t" style="right:1104.50px;transform:scaleX(0.9259);transform-origin:100% 0;top:522.76px;font-size:9.72px;line-height:12.15px;color:#1e1e28;-webkit-text-stroke:0.12px currentColor;">Alíq. %</div>
<div class="b" style="left:500.25px;top:520.40px;width:49.75px;height:17.10px;background:#fff;border:1px solid #bcc7d6;border-radius:1.5px;box-sizing:border-box"></div>
<div class="t" style="right:1052.50px;transform:scaleX(0.9259);transform-origin:100% 0;top:522.70px;font-size:9.936px;line-height:12.42px;color:#1e1e1e;-webkit-text-stroke:0.12px currentColor;">0,00</div>
<div class="b" style="left:572.30px;top:409.70px;width:88.60px;height:111.60px;border:1px solid #c8d2de;box-sizing:border-box;border-radius:1px"></div>
<div class="t" style="left:576.90px;top:404.80px;height:10px;background:#eef3fb;font-size:9.0px;line-height:10px;color:transparent;padding:0 1.5px">ICMS Externo</div>
<div class="t" style="left:578.40px;transform:scaleX(0.9259);transform-origin:0 0;top:403.36px;font-size:9.72px;line-height:12.15px;color:#1e1e28;-webkit-text-stroke:0.12px currentColor;">ICMS Externo</div>
<div class="t" style="right:997.40px;transform:scaleX(0.9259);transform-origin:100% 0;top:426.46px;font-size:9.72px;line-height:12.15px;color:#1e1e28;-webkit-text-stroke:0.12px currentColor;">CFOP</div>
<div class="b" style="left:606.20px;top:424.35px;width:29.20px;height:17.05px;background:#fff;border:1px solid #bcc7d6;border-radius:1.5px;box-sizing:border-box"></div>
<div class="t" style="right:967.20px;transform:scaleX(0.9259);transform-origin:100% 0;top:426.62px;font-size:9.936px;line-height:12.42px;color:#1e1e1e;-webkit-text-stroke:0.12px currentColor;">6102</div>
<div class="t" style="right:997.80px;transform:scaleX(0.9259);transform-origin:100% 0;top:450.06px;font-size:9.72px;line-height:12.15px;color:#1e1e28;-webkit-text-stroke:0.12px currentColor;">CST</div>
<div class="b" style="left:606.20px;top:447.10px;width:29.20px;height:17.30px;background:#fff;border:1px solid #676767;box-shadow:inset 1px 1px 0 #b8b8b8;box-sizing:border-box"></div>
<div class="t" style="left:607.80px;transform:scaleX(0.9259);transform-origin:0 0;top:449.50px;font-size:9.936px;line-height:12.42px;color:#1e1e1e;-webkit-text-stroke:0.12px currentColor;">041</div>
<svg class="b" style="left:641.30px;top:450.30px" width="11" height="11" viewBox="0 0 11 11"><rect x="0.5" y="8.5" width="8" height="2" fill="#e4e8ee"/><circle cx="4.3" cy="4.3" r="3.3" fill="#fbe6c0" stroke="#c9cdd3" stroke-width="1"/><circle cx="3.6" cy="3.6" r="1.2" fill="#f5b860"/><path d="M6.6 6.6L10 10" stroke="#2f7fb8" stroke-width="2" stroke-linecap="round"/></svg>
<div class="t" style="right:997.50px;transform:scaleX(0.9259);transform-origin:100% 0;top:473.76px;font-size:9.72px;line-height:12.15px;color:#1e1e28;-webkit-text-stroke:0.12px currentColor;">CSOSN</div>
<div class="b" style="left:606.45px;top:471.50px;width:49.55px;height:16.80px;background:#fff;border:1px solid #bcc7d6;border-radius:1.5px;box-sizing:border-box"></div>
<div class="t" style="left:609.95px;transform:scaleX(0.9259);transform-origin:0 0;top:473.65px;font-size:9.936px;line-height:12.42px;color:#1e1e1e;-webkit-text-stroke:0.12px currentColor;">102</div>
<svg class="b" style="left:644.50px;top:477.40px" width="9" height="5"><path d="M0.5 0.5L4.5 4.5L8.5 0.5" stroke="#7b8696" stroke-width="1" fill="none"/></svg>
<div class="t" style="right:997.50px;transform:scaleX(0.9259);transform-origin:100% 0;top:498.06px;font-size:9.72px;line-height:12.15px;color:#1e1e28;-webkit-text-stroke:0.12px currentColor;">Alíq. %</div>
<div class="b" style="left:606.45px;top:495.40px;width:49.55px;height:17.30px;background:#fff;border:1px solid #bcc7d6;border-radius:1.5px;box-sizing:border-box"></div>
<div class="t" style="right:946.50px;transform:scaleX(0.9259);transform-origin:100% 0;top:497.80px;font-size:9.936px;line-height:12.42px;color:#1e1e1e;-webkit-text-stroke:0.12px currentColor;">0</div>
<div class="t" style="left:577.60px;transform:scaleX(0.9259);transform-origin:0 0;top:531.96px;font-size:9.72px;line-height:12.15px;color:#1e1e28;-webkit-text-stroke:0.12px currentColor;">Cód. Benefício Fiscal</div>
<div class="b" style="left:665.20px;top:409.70px;width:112.40px;height:111.60px;border:1px solid #c8d2de;box-sizing:border-box;border-radius:1px"></div>
<div class="t" style="left:669.50px;top:404.80px;height:10px;background:#eef3fb;font-size:9.0px;line-height:10px;color:transparent;padding:0 1.5px">PIS/COFINS</div>
<div class="t" style="left:671.00px;transform:scaleX(0.9259);transform-origin:0 0;top:403.36px;font-size:9.72px;line-height:12.15px;color:#1e1e28;-webkit-text-stroke:0.12px currentColor;">PIS/COFINS</div>
<div class="t" style="right:872.90px;transform:scaleX(0.9259);transform-origin:100% 0;top:425.96px;font-size:9.72px;line-height:12.15px;color:#1e1e28;-webkit-text-stroke:0.12px currentColor;">CST Entrada</div>
<div class="b" style="left:736.50px;top:424.35px;width:36.20px;height:16.95px;background:#fff;border:1px solid #bcc7d6;border-radius:1.5px;box-sizing:border-box"></div>
<div class="t" style="left:740.00px;transform:scaleX(0.9259);transform-origin:0 0;top:426.57px;font-size:9.936px;line-height:12.42px;color:#1e1e1e;-webkit-text-stroke:0.12px currentColor;">07</div>
<svg class="b" style="left:761.00px;top:430.33px" width="9" height="5"><path d="M0.5 0.5L4.5 4.5L8.5 0.5" stroke="#7b8696" stroke-width="1" fill="none"/></svg>
<div class="t" style="right:872.90px;transform:scaleX(0.9259);transform-origin:100% 0;top:449.76px;font-size:9.72px;line-height:12.15px;color:#1e1e28;-webkit-text-stroke:0.12px currentColor;">CST Saída</div>
<div class="b" style="left:736.50px;top:447.40px;width:36.20px;height:16.80px;background:#fff;border:1px solid #bcc7d6;border-radius:1.5px;box-sizing:border-box"></div>
<div class="t" style="left:740.00px;transform:scaleX(0.9259);transform-origin:0 0;top:449.55px;font-size:9.936px;line-height:12.42px;color:#1e1e1e;-webkit-text-stroke:0.12px currentColor;">07</div>
<svg class="b" style="left:761.00px;top:453.30px" width="9" height="5"><path d="M0.5 0.5L4.5 4.5L8.5 0.5" stroke="#7b8696" stroke-width="1" fill="none"/></svg>
<div class="t" style="right:872.50px;transform:scaleX(0.9259);transform-origin:100% 0;top:473.76px;font-size:9.72px;line-height:12.15px;color:#1e1e28;-webkit-text-stroke:0.12px currentColor;">Aliq. Pis %</div>
<div class="b" style="left:736.70px;top:471.20px;width:36.30px;height:17.40px;background:#fff;border:1px solid #bcc7d6;border-radius:1.5px;box-sizing:border-box"></div>
<div class="t" style="right:829.50px;transform:scaleX(0.9259);transform-origin:100% 0;top:473.65px;font-size:9.936px;line-height:12.42px;color:#1e1e1e;-webkit-text-stroke:0.12px currentColor;">0,00</div>
<div class="t" style="right:872.50px;transform:scaleX(0.9259);transform-origin:100% 0;top:498.06px;font-size:9.72px;line-height:12.15px;color:#1e1e28;-webkit-text-stroke:0.12px currentColor;">Aliq. Cofins %</div>
<div class="b" style="left:736.70px;top:495.40px;width:36.30px;height:17.30px;background:#fff;border:1px solid #bcc7d6;border-radius:1.5px;box-sizing:border-box"></div>
<div class="t" style="right:829.50px;transform:scaleX(0.9259);transform-origin:100% 0;top:497.80px;font-size:9.936px;line-height:12.42px;color:#1e1e1e;-webkit-text-stroke:0.12px currentColor;">0,00</div>
<div class="b" style="left:665.20px;top:529.80px;width:112.00px;height:18.70px;background:#fff;border:1px solid #bcc7d6;border-radius:1.5px;box-sizing:border-box"></div>
<div class="t" style="left:668.20px;transform:scaleX(0.9259);transform-origin:0 0;top:532.90px;font-size:9.936px;line-height:12.42px;color:#80848c;-webkit-text-stroke:0.12px currentColor;">CBENEF</div>
<div class="b" style="left:782.30px;top:409.70px;width:101.30px;height:46.60px;border:1px solid #c8d2de;box-sizing:border-box;border-radius:1px"></div>
<div class="t" style="left:787.40px;top:404.80px;height:10px;background:#eef3fb;font-size:9.0px;line-height:10px;color:transparent;padding:0 1.5px">IPI</div>
<div class="t" style="left:788.90px;transform:scaleX(0.9259);transform-origin:0 0;top:403.36px;font-size:9.72px;line-height:12.15px;color:#1e1e28;-webkit-text-stroke:0.12px currentColor;">IPI</div>
<div class="t" style="right:776.50px;transform:scaleX(0.9259);transform-origin:100% 0;top:416.96px;font-size:9.72px;line-height:12.15px;color:#1e1e28;-webkit-text-stroke:0.12px currentColor;">CST</div>
<div class="b" style="left:830.30px;top:413.70px;width:41.20px;height:16.90px;background:#fff;border:1px solid #bcc7d6;border-radius:1.5px;box-sizing:border-box"></div>
<div class="t" style="left:833.80px;transform:scaleX(0.9259);transform-origin:0 0;top:415.90px;font-size:9.936px;line-height:12.42px;color:#1e1e1e;-webkit-text-stroke:0.12px currentColor;">53</div>
<svg class="b" style="left:859.80px;top:419.65px" width="9" height="5"><path d="M0.5 0.5L4.5 4.5L8.5 0.5" stroke="#7b8696" stroke-width="1" fill="none"/></svg>
<div class="t" style="right:776.50px;transform:scaleX(0.9259);transform-origin:100% 0;top:437.46px;font-size:9.72px;line-height:12.15px;color:#1e1e28;-webkit-text-stroke:0.12px currentColor;">Alíquota</div>
<div class="b" style="left:830.30px;top:434.60px;width:41.20px;height:17.00px;background:#fff;border:1px solid #bcc7d6;border-radius:1.5px;box-sizing:border-box"></div>
<div class="t" style="right:731.00px;transform:scaleX(0.9259);transform-origin:100% 0;top:436.85px;font-size:9.936px;line-height:12.42px;color:#1e1e1e;-webkit-text-stroke:0.12px currentColor;">0,00</div>
<div class="b" style="left:782.30px;top:464.00px;width:101.30px;height:83.90px;border:1px solid #c8d2de;box-sizing:border-box;border-radius:1px"></div>
<div class="t" style="left:787.40px;top:458.60px;height:10px;background:#eef3fb;font-size:9.0px;line-height:10px;color:transparent;padding:0 1.5px">Outros</div>
<div class="t" style="left:788.90px;transform:scaleX(0.9259);transform-origin:0 0;top:457.16px;font-size:9.72px;line-height:12.15px;color:#1e1e28;-webkit-text-stroke:0.12px currentColor;">Outros</div>
<div class="t" style="right:775.30px;transform:scaleX(0.9259);transform-origin:100% 0;top:477.36px;font-size:9.72px;line-height:12.15px;color:#1e1e28;-webkit-text-stroke:0.12px currentColor;">% FCP</div>
<div class="b" style="left:830.30px;top:475.40px;width:41.70px;height:17.20px;background:#fff;border:1px solid #bcc7d6;border-radius:1.5px;box-sizing:border-box"></div>
<div class="t" style="right:730.50px;transform:scaleX(0.9259);transform-origin:100% 0;top:477.75px;font-size:9.936px;line-height:12.42px;color:#1e1e1e;-webkit-text-stroke:0.12px currentColor;">0,00</div>
<div class="t" style="right:773.50px;transform:scaleX(0.9259);transform-origin:100% 0;top:500.16px;font-size:9.72px;line-height:12.15px;color:#1e1e28;-webkit-text-stroke:0.12px currentColor;">% MVA</div>
<div class="b" style="left:830.30px;top:498.00px;width:41.70px;height:17.10px;background:#fff;border:1px solid #bcc7d6;border-radius:1.5px;box-sizing:border-box"></div>
<div class="t" style="right:730.50px;transform:scaleX(0.9259);transform-origin:100% 0;top:500.30px;font-size:9.936px;line-height:12.42px;color:#1e1e1e;-webkit-text-stroke:0.12px currentColor;">0,00</div>
<div class="t" style="left:791.00px;transform:scaleX(0.9259);transform-origin:0 0;top:515.76px;font-size:9.72px;line-height:12.15px;color:#1e1e28;-webkit-text-stroke:0.12px currentColor;">% Base</div>
<div class="t" style="left:790.50px;transform:scaleX(0.9259);transform-origin:0 0;top:526.16px;font-size:9.72px;line-height:12.15px;color:#1e1e28;-webkit-text-stroke:0.12px currentColor;">Reduzida</div>
<div class="b" style="left:830.30px;top:521.30px;width:41.70px;height:17.30px;background:#fff;border:1px solid #bcc7d6;border-radius:1.5px;box-sizing:border-box"></div>
<div class="t" style="right:730.50px;transform:scaleX(0.9259);transform-origin:100% 0;top:523.70px;font-size:9.936px;line-height:12.42px;color:#1e1e1e;-webkit-text-stroke:0.12px currentColor;">0,00</div>
<div class="t" style="left:923.75px;transform:scaleX(0.9259);transform-origin:0 0;top:381.16px;font-size:9.72px;line-height:12.15px;color:#1e1e28;-webkit-text-stroke:0.12px currentColor;">Dois cliques para alterar a foto.</div>
<div class="b" style="left:924.40px;top:396.90px;width:123.95px;height:168.50px;border:1px solid #c8d2de;box-sizing:border-box;border-radius:1px"></div>
<div class="b" style="left:1054.40px;top:388.35px;width:102.00px;height:176.35px;border:1px solid #c8d2de;box-sizing:border-box;border-radius:1px"></div>
<div class="t" style="left:1058.50px;top:382.50px;height:10px;background:#eef3fb;font-size:9.0px;line-height:10px;color:transparent;padding:0 1.5px">Parâmetros</div>
<div class="t" style="left:1060.00px;transform:scaleX(0.9259);transform-origin:0 0;top:381.06px;font-size:9.72px;line-height:12.15px;color:#1e1e28;-webkit-text-stroke:0.12px currentColor;">Parâmetros</div>
<svg class="b" style="left:1059.80px;top:399.40px" width="11" height="11"><rect x="0" y="0" width="11" height="11" rx="2" fill="#2b7de0"/><path d="M2.4 5.6L4.5 7.8L8.7 3.2" stroke="#fff" stroke-width="1.1" fill="none"/></svg>
<div class="t" style="left:1073.90px;transform:scaleX(0.9259);transform-origin:0 0;top:398.86px;font-size:9.72px;line-height:12.15px;color:#1e1e28;-webkit-text-stroke:0.12px currentColor;">Ativo</div>
<svg class="b" style="left:1059.80px;top:413.70px" width="11" height="11"><rect x="0" y="0" width="11" height="11" rx="2" fill="#2b7de0"/><path d="M2.4 5.6L4.5 7.8L8.7 3.2" stroke="#fff" stroke-width="1.1" fill="none"/></svg>
<div class="t" style="left:1073.90px;transform:scaleX(0.9259);transform-origin:0 0;top:413.16px;font-size:9.72px;line-height:12.15px;color:#1e1e28;-webkit-text-stroke:0.12px currentColor;">É Fiscal</div>
<svg class="b" style="left:1059.80px;top:427.80px" width="11" height="11"><rect x="0.75" y="0.75" width="9.5" height="9.5" rx="2" fill="#fff" stroke="#76808e" stroke-width="1.3"/></svg>
<div class="t" style="left:1073.90px;transform:scaleX(0.9259);transform-origin:0 0;top:427.26px;font-size:9.72px;line-height:12.15px;color:#1e1e28;-webkit-text-stroke:0.12px currentColor;">Paga Comissão</div>
<svg class="b" style="left:1059.80px;top:441.10px" width="11" height="11"><rect x="0.75" y="0.75" width="9.5" height="9.5" rx="2" fill="#fff" stroke="#76808e" stroke-width="1.3"/></svg>
<div class="t" style="left:1073.90px;transform:scaleX(0.9259);transform-origin:0 0;top:440.56px;font-size:9.72px;line-height:12.15px;color:#1e1e28;-webkit-text-stroke:0.12px currentColor;">Preço Variavel</div>
<svg class="b" style="left:1059.80px;top:453.70px" width="11" height="11"><rect x="0.75" y="0.75" width="9.5" height="9.5" rx="2" fill="#fff" stroke="#76808e" stroke-width="1.3"/></svg>
<div class="t" style="left:1073.90px;transform:scaleX(0.9259);transform-origin:0 0;top:453.16px;font-size:9.72px;line-height:12.15px;color:#1e1e28;-webkit-text-stroke:0.12px currentColor;">Composição</div>
<svg class="b" style="left:1059.80px;top:467.20px" width="11" height="11"><rect x="0.75" y="0.75" width="9.5" height="9.5" rx="2" fill="#fff" stroke="#76808e" stroke-width="1.3"/></svg>
<div class="t" style="left:1073.90px;transform:scaleX(0.9259);transform-origin:0 0;top:466.66px;font-size:9.72px;line-height:12.15px;color:#1e1e28;-webkit-text-stroke:0.12px currentColor;">Serviço</div>
<svg class="b" style="left:1059.80px;top:480.30px" width="11" height="11"><rect x="0.75" y="0.75" width="9.5" height="9.5" rx="2" fill="#fff" stroke="#76808e" stroke-width="1.3"/></svg>
<div class="t" style="left:1073.90px;transform:scaleX(0.9259);transform-origin:0 0;top:479.76px;font-size:9.72px;line-height:12.15px;color:#1e1e28;-webkit-text-stroke:0.12px currentColor;">Grade</div>
<svg class="b" style="left:1059.80px;top:493.80px" width="11" height="11"><rect x="0.75" y="0.75" width="9.5" height="9.5" rx="2" fill="#fff" stroke="#76808e" stroke-width="1.3"/></svg>
<div class="t" style="left:1073.90px;transform:scaleX(0.9259);transform-origin:0 0;top:493.26px;font-size:9.72px;line-height:12.15px;color:#1e1e28;-webkit-text-stroke:0.12px currentColor;">Usar Tab. Preço</div>
<svg class="b" style="left:1059.80px;top:507.20px" width="11" height="11"><rect x="0" y="0" width="11" height="11" rx="2" fill="#2b7de0"/><path d="M3 5.5L8 5.5" stroke="#fff" stroke-width="1.1"/></svg>
<div class="t" style="left:1073.90px;transform:scaleX(0.9259);transform-origin:0 0;top:506.66px;font-size:9.72px;line-height:12.15px;color:#1e1e28;-webkit-text-stroke:0.12px currentColor;">Combustível</div>
<svg class="b" style="left:1059.80px;top:520.50px" width="11" height="11"><rect x="0.75" y="0.75" width="9.5" height="9.5" rx="2" fill="#fff" stroke="#76808e" stroke-width="1.3"/></svg>
<div class="t" style="left:1073.90px;transform:scaleX(0.9259);transform-origin:0 0;top:519.96px;font-size:9.72px;line-height:12.15px;color:#1e1e28;-webkit-text-stroke:0.12px currentColor;">Usa IMEI</div>
<svg class="b" style="left:1059.80px;top:534.60px" width="11" height="11"><rect x="0.75" y="0.75" width="9.5" height="9.5" rx="2" fill="#fff" stroke="#76808e" stroke-width="1.3"/></svg>
<div class="t" style="left:1073.90px;transform:scaleX(0.9259);transform-origin:0 0;top:534.06px;font-size:9.72px;line-height:12.15px;color:#1e1e28;-webkit-text-stroke:0.12px currentColor;">Contr. Est. Grade</div>
<svg class="b" style="left:1059.80px;top:550.00px" width="11" height="11"><rect x="0" y="0" width="11" height="11" rx="2" fill="#2b7de0"/><path d="M2.4 5.6L4.5 7.8L8.7 3.2" stroke="#fff" stroke-width="1.1" fill="none"/></svg>
<div class="t" style="left:1073.90px;transform:scaleX(0.9259);transform-origin:0 0;top:549.46px;font-size:9.72px;line-height:12.15px;color:#1e1e28;-webkit-text-stroke:0.12px currentColor;">Mostrar no App</div>
<div class="b" style="left:449.20px;top:579.80px;width:125.00px;height:41.90px;background:#545454;border:1px solid #3c3c3c;border-radius:3px;box-sizing:border-box"></div>
<svg class="b" style="left:471px;top:589.3px" width="22" height="22" viewBox="0 0 22 22"><defs><radialGradient id="gg" cx="0.4" cy="0.3" r="0.75"><stop offset="0" stop-color="#b6dc5a"/><stop offset="1" stop-color="#5c9a1e"/></radialGradient></defs><circle cx="11" cy="11" r="10.8" fill="url(#gg)"/><path d="M5 11.5 L9 15.5 L17 6.5" stroke="#fff" stroke-width="2.8" fill="none" stroke-linejoin="round"/></svg>
<div class="t" style="left:498.60px;transform:scaleX(0.9259);transform-origin:0 0;top:593.43px;font-size:12.528px;line-height:15.66px;color:#f0f2f5;-webkit-text-stroke:0.12px currentColor;">F5 | Salvar</div>
<div class="b" style="left:580.40px;top:579.80px;width:125.30px;height:41.90px;background:#545454;border:1px solid #3c3c3c;border-radius:3px;box-sizing:border-box"></div>
<svg class="b" style="left:604.3px;top:589.3px" width="22" height="22" viewBox="0 0 22 22"><defs><radialGradient id="rg" cx="0.4" cy="0.3" r="0.75"><stop offset="0" stop-color="#f26b5e"/><stop offset="1" stop-color="#b8211a"/></radialGradient></defs><circle cx="11" cy="11" r="10.8" fill="url(#rg)"/><path d="M7.2 7.2L14.8 14.8M14.8 7.2L7.2 14.8" stroke="#fff" stroke-width="3.2"/></svg>
<div class="t" style="left:632.60px;transform:scaleX(0.9259);transform-origin:0 0;top:593.43px;font-size:12.528px;line-height:15.66px;color:#f0f2f5;-webkit-text-stroke:0.12px currentColor;">ESC | Sair</div>
<div class="t" style="left:877.70px;transform:scaleX(0.9259);transform-origin:0 0;top:584.02px;font-size:13.252px;line-height:16.57px;color:#222;-webkit-text-stroke:0.12px currentColor;">* As opções Grade e Composição estarão</div>
<div class="t" style="left:877.70px;transform:scaleX(0.9259);transform-origin:0 0;top:600.52px;font-size:13.252px;line-height:16.57px;color:#222;-webkit-text-stroke:0.12px currentColor;">disponíveis somente na edição desse item.</div>
</body></html>
